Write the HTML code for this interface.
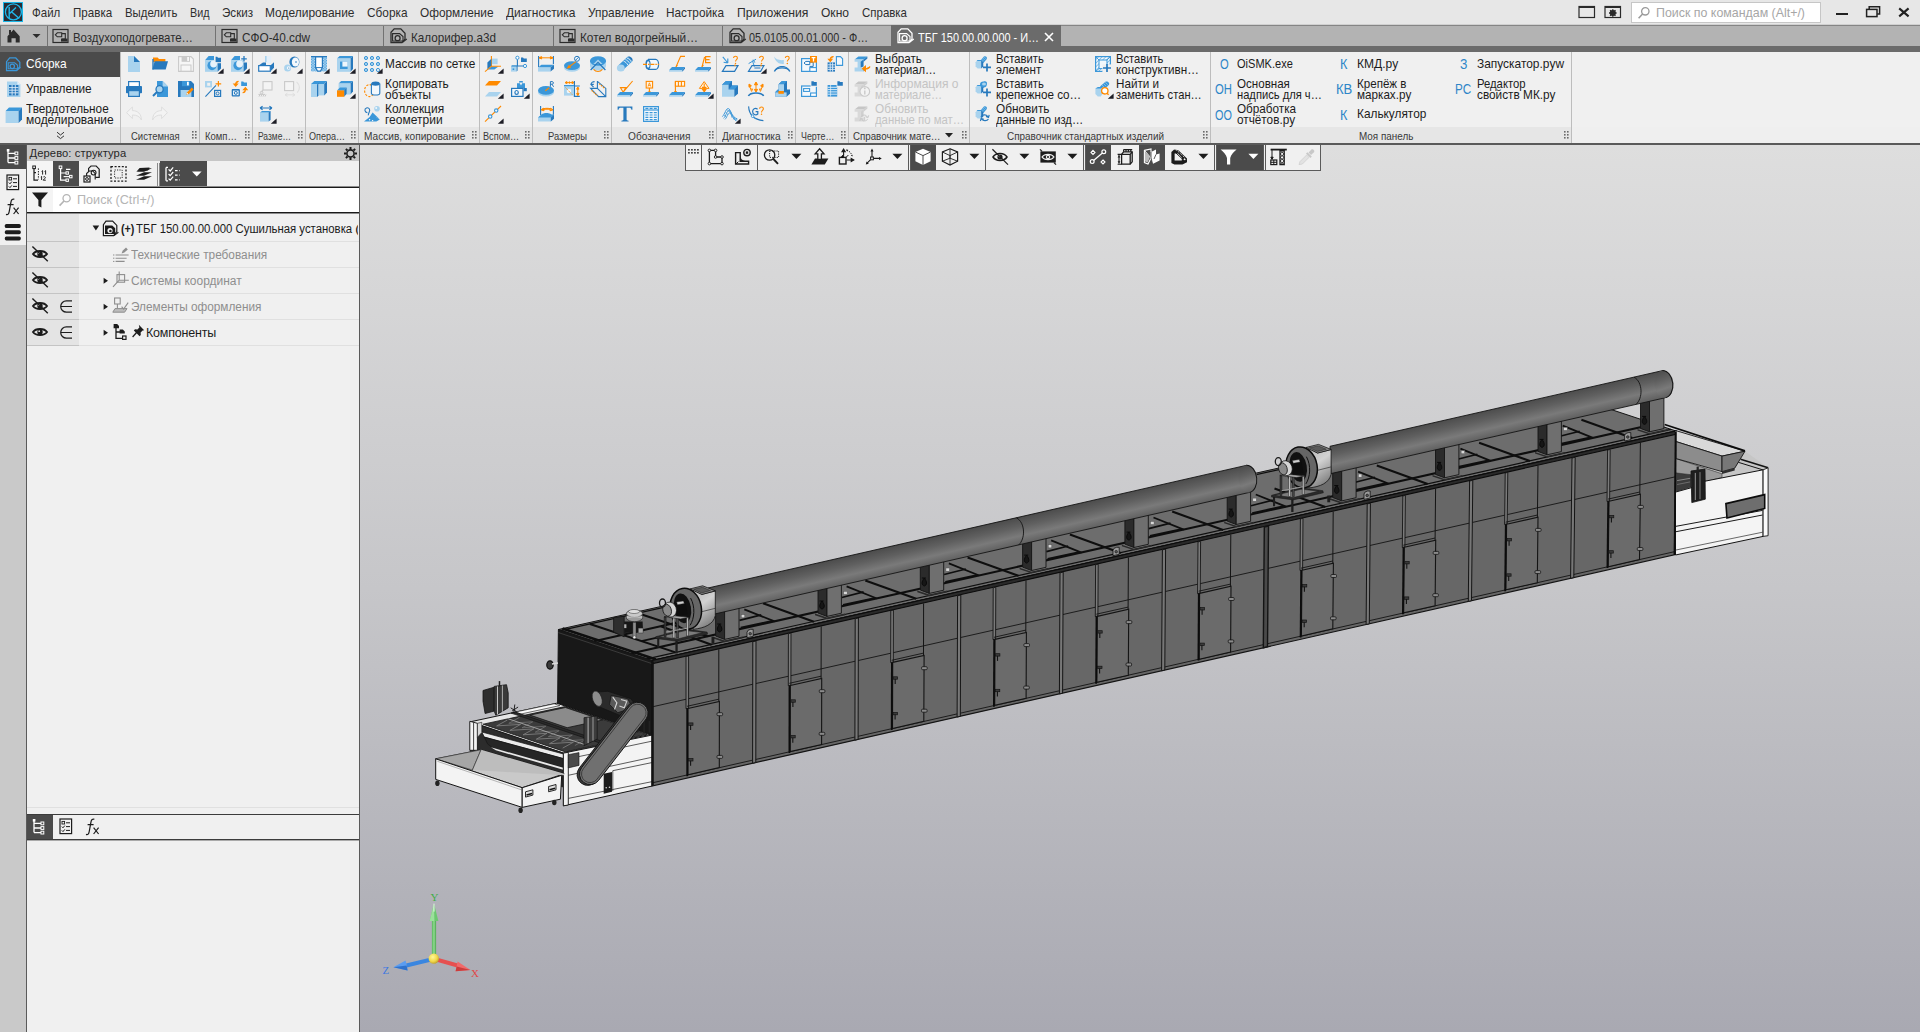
<!DOCTYPE html>
<html lang="ru"><head><meta charset="utf-8"><title>KOMPAS-3D</title><style>
html,body{margin:0;padding:0;}
body{width:1920px;height:1032px;overflow:hidden;position:relative;background:#c9c9c9;font-family:"Liberation Sans",sans-serif;}
.t{position:absolute;white-space:pre;transform-origin:0 0;}
.b{position:absolute;}
svg{overflow:visible;}
</style></head>
<body>
<!-- view -->
<div class="b" style="left:360px;top:145px;width:1560px;height:887px;background:linear-gradient(180deg,#dedede 0%,#c6c6c9 50%,#a9a9b2 100%);"></div>
<svg class="b" style="left:0;top:0" width="1920" height="1032" viewBox="0 0 1920 1032"><defs><linearGradient id="pg" gradientUnits="userSpaceOnUse" x1="1016.3" y1="517.8" x2="1022.2" y2="543.6" spreadMethod="pad"><stop offset="0" stop-color="#4c4c4c"/><stop offset="0.35" stop-color="#606060"/><stop offset="0.7" stop-color="#7a7a7a"/><stop offset="1" stop-color="#626262"/></linearGradient><linearGradient id="pgc" x1="0" y1="0" x2="0.3" y2="1"><stop offset="0" stop-color="#505050"/><stop offset="0.6" stop-color="#727272"/><stop offset="1" stop-color="#5e5e5e"/></linearGradient></defs>
<polygon points="652.0,660.5 1676.0,431.0 1582.4,400.0 558.4,629.5" fill="#6d6d6d" stroke="#141414" stroke-width="1" />
<line x1="646.9" y1="658.8" x2="1670.9" y2="429.3" stroke="#0e0e0e" stroke-width="1.2" />
<line x1="630.8" y1="653.5" x2="1654.8" y2="424.0" stroke="#0e0e0e" stroke-width="2.1" />
<line x1="561.2" y1="630.4" x2="1585.2" y2="400.9" stroke="#0e0e0e" stroke-width="1.2" />
<line x1="660.7" y1="626.3" x2="711.6" y2="644.7" stroke="#0e0e0e" stroke-width="2.1" />
<line x1="744.3" y1="609.3" x2="774.6" y2="621.4" stroke="#0e0e0e" stroke-width="1.8" />
<line x1="739.5" y1="620.4" x2="761.3" y2="614.9" stroke="#0e0e0e" stroke-width="1.7" />
<line x1="740.7" y1="627.7" x2="772.2" y2="620.9" stroke="#0e0e0e" stroke-width="1.7" />
<line x1="763.0" y1="603.3" x2="813.9" y2="621.7" stroke="#0e0e0e" stroke-width="2.1" />
<line x1="846.6" y1="586.3" x2="876.9" y2="598.5" stroke="#0e0e0e" stroke-width="1.8" />
<line x1="841.8" y1="597.5" x2="863.6" y2="591.9" stroke="#0e0e0e" stroke-width="1.7" />
<line x1="843.0" y1="604.8" x2="874.5" y2="598.0" stroke="#0e0e0e" stroke-width="1.7" />
<line x1="865.3" y1="580.4" x2="916.2" y2="598.8" stroke="#0e0e0e" stroke-width="2.1" />
<line x1="948.9" y1="563.4" x2="979.2" y2="575.5" stroke="#0e0e0e" stroke-width="1.8" />
<line x1="944.1" y1="574.5" x2="965.9" y2="569.0" stroke="#0e0e0e" stroke-width="1.7" />
<line x1="945.3" y1="581.8" x2="976.8" y2="575.0" stroke="#0e0e0e" stroke-width="1.7" />
<line x1="967.6" y1="557.4" x2="1018.5" y2="575.8" stroke="#0e0e0e" stroke-width="2.1" />
<line x1="1051.2" y1="540.4" x2="1081.5" y2="552.6" stroke="#0e0e0e" stroke-width="1.8" />
<line x1="1046.4" y1="551.6" x2="1068.2" y2="546.0" stroke="#0e0e0e" stroke-width="1.7" />
<line x1="1047.6" y1="558.9" x2="1079.1" y2="552.1" stroke="#0e0e0e" stroke-width="1.7" />
<line x1="1069.9" y1="534.5" x2="1120.8" y2="552.9" stroke="#0e0e0e" stroke-width="2.1" />
<line x1="1153.5" y1="517.5" x2="1183.8" y2="529.6" stroke="#0e0e0e" stroke-width="1.8" />
<line x1="1148.7" y1="528.6" x2="1170.5" y2="523.1" stroke="#0e0e0e" stroke-width="1.7" />
<line x1="1149.9" y1="535.9" x2="1181.4" y2="529.1" stroke="#0e0e0e" stroke-width="1.7" />
<line x1="1172.2" y1="511.5" x2="1223.1" y2="529.9" stroke="#0e0e0e" stroke-width="2.1" />
<line x1="1255.8" y1="494.5" x2="1286.1" y2="506.7" stroke="#0e0e0e" stroke-width="1.8" />
<line x1="1251.0" y1="505.7" x2="1272.8" y2="500.1" stroke="#0e0e0e" stroke-width="1.7" />
<line x1="1252.2" y1="513.0" x2="1283.7" y2="506.2" stroke="#0e0e0e" stroke-width="1.7" />
<line x1="1274.5" y1="488.6" x2="1325.4" y2="507.0" stroke="#0e0e0e" stroke-width="2.1" />
<line x1="1358.1" y1="471.6" x2="1388.4" y2="483.7" stroke="#0e0e0e" stroke-width="1.8" />
<line x1="1353.3" y1="482.7" x2="1375.1" y2="477.2" stroke="#0e0e0e" stroke-width="1.7" />
<line x1="1354.5" y1="490.0" x2="1386.0" y2="483.2" stroke="#0e0e0e" stroke-width="1.7" />
<line x1="1376.8" y1="465.6" x2="1427.7" y2="484.0" stroke="#0e0e0e" stroke-width="2.1" />
<line x1="1460.4" y1="448.6" x2="1490.7" y2="460.8" stroke="#0e0e0e" stroke-width="1.8" />
<line x1="1455.6" y1="459.8" x2="1477.4" y2="454.2" stroke="#0e0e0e" stroke-width="1.7" />
<line x1="1456.8" y1="467.1" x2="1488.3" y2="460.3" stroke="#0e0e0e" stroke-width="1.7" />
<line x1="1479.1" y1="442.7" x2="1530.0" y2="461.1" stroke="#0e0e0e" stroke-width="2.1" />
<line x1="1562.7" y1="425.7" x2="1593.0" y2="437.8" stroke="#0e0e0e" stroke-width="1.8" />
<line x1="1557.9" y1="436.8" x2="1579.7" y2="431.3" stroke="#0e0e0e" stroke-width="1.7" />
<line x1="1559.1" y1="444.1" x2="1590.6" y2="437.3" stroke="#0e0e0e" stroke-width="1.7" />
<line x1="1581.4" y1="419.7" x2="1632.3" y2="438.1" stroke="#0e0e0e" stroke-width="2.1" />
<line x1="656.1" y1="659.6" x2="562.5" y2="628.6" stroke="#0e0e0e" stroke-width="2.6" />
<line x1="675.5" y1="652.4" x2="589.9" y2="624.0" stroke="#0e0e0e" stroke-width="2" />
<line x1="594.0" y1="641.3" x2="686.1" y2="620.6" stroke="#0e0e0e" stroke-width="2" />
<line x1="641.4" y1="641.1" x2="689.5" y2="630.3" stroke="#0e0e0e" stroke-width="1.8" />
<line x1="707.6" y1="636.3" x2="638.0" y2="613.2" stroke="#0e0e0e" stroke-width="2" />
<path d="M747.0 637.7v-5.4q0.4-2.6 3.6-3h2.6v7z" fill="#9a9a9a" stroke="#111" stroke-width="0.8"/><circle cx="750.2" cy="633.7" r="1.3" fill="#555" stroke="#111" stroke-width="0.6"/>
<path d="M1113.0 555.7v-5.4q0.4-2.6 3.6-3h2.6v7z" fill="#9a9a9a" stroke="#111" stroke-width="0.8"/><circle cx="1116.2" cy="551.7" r="1.3" fill="#555" stroke="#111" stroke-width="0.6"/>
<path d="M1364.0 499.4v-5.4q0.4-2.6 3.6-3h2.6v7z" fill="#9a9a9a" stroke="#111" stroke-width="0.8"/><circle cx="1367.2" cy="495.4" r="1.3" fill="#555" stroke="#111" stroke-width="0.6"/>
<path d="M1624.6 441.0v-5.4q0.4-2.6 3.6-3h2.6v7z" fill="#9a9a9a" stroke="#111" stroke-width="0.8"/><circle cx="1627.8" cy="437.0" r="1.3" fill="#555" stroke="#111" stroke-width="0.6"/>
<polygon points="652.0,660.5 1676.0,431.0 1674.4,554.8 652.0,786.0" fill="#676767" stroke="#141414" stroke-width="1.2" />
<polygon points="652.0,660.5 1676.0,431.0 1676.0,434.2 652.0,663.8" fill="#2a2a2a" stroke="#0c0c0c" stroke-width="1.1" />
<line x1="652.0" y1="782.9" x2="1674.4" y2="551.7" stroke="#141414" stroke-width="0.9" />
<line x1="652.0" y1="706.9" x2="1675.4" y2="476.8" stroke="#141414" stroke-width="0.9" />
<polygon points="686.0,656.6 688.6,656.1 688.6,708.1 686.0,708.7" fill="#7a7a7a" stroke="#141414" stroke-width="0.9" />
<line x1="718.8" y1="649.3" x2="718.8" y2="701.3" stroke="#141414" stroke-width="1.0" />
<line x1="687.0" y1="706.3" x2="718.8" y2="699.2" stroke="#141414" stroke-width="0.9" />
<polygon points="688.0,708.5 719.4,701.4 719.3,767.6 688.0,774.7" fill="#6b6b6b" stroke="#141414" stroke-width="1.1" />
<line x1="687.2" y1="708.4" x2="687.2" y2="776.2" stroke="#0c0c0c" stroke-width="1.8" />
<rect x="717.0" y="712.7" width="5.6" height="3" rx="1" fill="#8a8a8a" stroke="#141414" stroke-width="0.8"/>
<rect x="717.0" y="755.4" width="5.6" height="3" rx="1" fill="#8a8a8a" stroke="#141414" stroke-width="0.8"/>
<rect x="688.6" y="722.9" width="4.4" height="2.4" fill="#3a3a3a" stroke="#141414" stroke-width="0.7"/>
<line x1="690.6" y1="725.1" x2="690.6" y2="730.1" stroke="#141414" stroke-width="1.1" />
<rect x="688.6" y="758.6" width="4.4" height="2.4" fill="#3a3a3a" stroke="#141414" stroke-width="0.7"/>
<line x1="690.6" y1="760.8" x2="690.6" y2="765.8" stroke="#141414" stroke-width="1.1" />
<polygon points="752.8,641.7 756.0,641.0 755.8,762.5 752.6,763.2" fill="#777" stroke="#141414" stroke-width="1.0" />
<polygon points="788.4,633.7 791.0,633.1 790.9,685.1 788.3,685.7" fill="#7a7a7a" stroke="#141414" stroke-width="0.9" />
<line x1="821.2" y1="626.3" x2="821.1" y2="678.3" stroke="#141414" stroke-width="1.0" />
<line x1="789.3" y1="683.3" x2="821.1" y2="676.2" stroke="#141414" stroke-width="0.9" />
<polygon points="790.3,685.5 821.7,678.4 821.6,744.5 790.2,751.6" fill="#6b6b6b" stroke="#141414" stroke-width="1.1" />
<line x1="789.5" y1="685.4" x2="789.4" y2="753.0" stroke="#0c0c0c" stroke-width="1.8" />
<rect x="819.3" y="689.7" width="5.6" height="3" rx="1" fill="#8a8a8a" stroke="#141414" stroke-width="0.8"/>
<rect x="819.2" y="732.3" width="5.6" height="3" rx="1" fill="#8a8a8a" stroke="#141414" stroke-width="0.8"/>
<rect x="790.9" y="699.8" width="4.4" height="2.4" fill="#3a3a3a" stroke="#141414" stroke-width="0.7"/>
<line x1="792.9" y1="702.0" x2="792.9" y2="707.0" stroke="#141414" stroke-width="1.1" />
<rect x="790.8" y="735.5" width="4.4" height="2.4" fill="#3a3a3a" stroke="#141414" stroke-width="0.7"/>
<line x1="792.8" y1="737.7" x2="792.8" y2="742.7" stroke="#141414" stroke-width="1.1" />
<polygon points="855.2,618.7 858.4,618.0 858.1,739.4 854.9,740.1" fill="#777" stroke="#141414" stroke-width="1.0" />
<polygon points="890.8,610.7 893.4,610.1 893.3,662.1 890.7,662.6" fill="#7a7a7a" stroke="#141414" stroke-width="0.9" />
<line x1="923.6" y1="603.4" x2="923.5" y2="655.3" stroke="#141414" stroke-width="1.0" />
<line x1="891.7" y1="660.3" x2="923.5" y2="653.1" stroke="#141414" stroke-width="0.9" />
<polygon points="892.7,662.4 924.1,655.4 923.8,721.4 892.5,728.5" fill="#6b6b6b" stroke="#141414" stroke-width="1.1" />
<line x1="891.9" y1="662.4" x2="891.7" y2="729.9" stroke="#0c0c0c" stroke-width="1.8" />
<rect x="921.6" y="666.7" width="5.6" height="3" rx="1" fill="#8a8a8a" stroke="#141414" stroke-width="0.8"/>
<rect x="921.5" y="709.2" width="5.6" height="3" rx="1" fill="#8a8a8a" stroke="#141414" stroke-width="0.8"/>
<rect x="893.2" y="676.8" width="4.4" height="2.4" fill="#3a3a3a" stroke="#141414" stroke-width="0.7"/>
<line x1="895.2" y1="679.0" x2="895.2" y2="684.0" stroke="#141414" stroke-width="1.1" />
<rect x="893.1" y="712.4" width="4.4" height="2.4" fill="#3a3a3a" stroke="#141414" stroke-width="0.7"/>
<line x1="895.1" y1="714.6" x2="895.1" y2="719.6" stroke="#141414" stroke-width="1.1" />
<polygon points="957.6,595.8 960.8,595.0 960.3,716.3 957.1,717.0" fill="#777" stroke="#141414" stroke-width="1.0" />
<polygon points="993.2,587.8 995.8,587.2 995.6,639.0 993.0,639.6" fill="#7a7a7a" stroke="#141414" stroke-width="0.9" />
<line x1="1026.0" y1="580.4" x2="1025.8" y2="632.2" stroke="#141414" stroke-width="1.0" />
<line x1="994.0" y1="637.3" x2="1025.8" y2="630.1" stroke="#141414" stroke-width="0.9" />
<polygon points="995.0,639.4 1026.4,632.4 1026.1,698.3 994.7,705.4" fill="#6b6b6b" stroke="#141414" stroke-width="1.1" />
<line x1="994.2" y1="639.3" x2="993.9" y2="706.8" stroke="#0c0c0c" stroke-width="1.8" />
<rect x="1023.9" y="643.6" width="5.6" height="3" rx="1" fill="#8a8a8a" stroke="#141414" stroke-width="0.8"/>
<rect x="1023.7" y="686.1" width="5.6" height="3" rx="1" fill="#8a8a8a" stroke="#141414" stroke-width="0.8"/>
<rect x="995.5" y="653.7" width="4.4" height="2.4" fill="#3a3a3a" stroke="#141414" stroke-width="0.7"/>
<line x1="997.5" y1="655.9" x2="997.5" y2="660.9" stroke="#141414" stroke-width="1.1" />
<rect x="995.4" y="689.3" width="4.4" height="2.4" fill="#3a3a3a" stroke="#141414" stroke-width="0.7"/>
<line x1="997.4" y1="691.5" x2="997.4" y2="696.5" stroke="#141414" stroke-width="1.1" />
<polygon points="1060.0,572.8 1063.2,572.1 1062.6,693.2 1059.4,693.9" fill="#777" stroke="#141414" stroke-width="1.0" />
<polygon points="1095.6,564.8 1098.2,564.2 1097.9,616.0 1095.3,616.6" fill="#7a7a7a" stroke="#141414" stroke-width="0.9" />
<line x1="1128.4" y1="557.5" x2="1128.1" y2="609.2" stroke="#141414" stroke-width="1.0" />
<line x1="1096.3" y1="614.2" x2="1128.1" y2="607.1" stroke="#141414" stroke-width="0.9" />
<polygon points="1097.3,616.4 1128.7,609.3 1128.3,675.2 1096.9,682.3" fill="#6b6b6b" stroke="#141414" stroke-width="1.1" />
<line x1="1096.5" y1="616.3" x2="1096.1" y2="683.7" stroke="#0c0c0c" stroke-width="1.8" />
<rect x="1126.2" y="620.6" width="5.6" height="3" rx="1" fill="#8a8a8a" stroke="#141414" stroke-width="0.8"/>
<rect x="1126.0" y="663.0" width="5.6" height="3" rx="1" fill="#8a8a8a" stroke="#141414" stroke-width="0.8"/>
<rect x="1097.8" y="630.7" width="4.4" height="2.4" fill="#3a3a3a" stroke="#141414" stroke-width="0.7"/>
<line x1="1099.8" y1="632.9" x2="1099.8" y2="637.9" stroke="#141414" stroke-width="1.1" />
<rect x="1097.6" y="666.2" width="4.4" height="2.4" fill="#3a3a3a" stroke="#141414" stroke-width="0.7"/>
<line x1="1099.6" y1="668.4" x2="1099.6" y2="673.4" stroke="#141414" stroke-width="1.1" />
<polygon points="1162.4,549.8 1165.6,549.1 1164.8,670.0 1161.6,670.8" fill="#777" stroke="#141414" stroke-width="1.0" />
<polygon points="1198.0,541.9 1200.6,541.3 1200.2,593.0 1197.6,593.6" fill="#7a7a7a" stroke="#141414" stroke-width="0.9" />
<line x1="1230.8" y1="534.5" x2="1230.4" y2="586.2" stroke="#141414" stroke-width="1.0" />
<line x1="1198.7" y1="591.2" x2="1230.5" y2="584.1" stroke="#141414" stroke-width="0.9" />
<polygon points="1199.6,593.4 1231.0,586.3 1230.6,652.1 1199.2,659.2" fill="#6b6b6b" stroke="#141414" stroke-width="1.1" />
<line x1="1198.8" y1="593.3" x2="1198.4" y2="660.6" stroke="#0c0c0c" stroke-width="1.8" />
<rect x="1228.6" y="597.5" width="5.6" height="3" rx="1" fill="#8a8a8a" stroke="#141414" stroke-width="0.8"/>
<rect x="1228.2" y="639.9" width="5.6" height="3" rx="1" fill="#8a8a8a" stroke="#141414" stroke-width="0.8"/>
<rect x="1200.1" y="607.6" width="4.4" height="2.4" fill="#3a3a3a" stroke="#141414" stroke-width="0.7"/>
<line x1="1202.1" y1="609.8" x2="1202.1" y2="614.8" stroke="#141414" stroke-width="1.1" />
<rect x="1199.9" y="643.1" width="4.4" height="2.4" fill="#3a3a3a" stroke="#141414" stroke-width="0.7"/>
<line x1="1201.9" y1="645.3" x2="1201.9" y2="650.3" stroke="#141414" stroke-width="1.1" />
<polygon points="1264.3,527.0 1268.5,526.1 1267.5,646.8 1263.3,647.8" fill="#4a4a4a" stroke="#141414" stroke-width="1.4" />
<polygon points="1300.4,518.9 1303.0,518.3 1302.6,570.0 1300.0,570.5" fill="#7a7a7a" stroke="#141414" stroke-width="0.9" />
<line x1="1333.2" y1="511.5" x2="1332.8" y2="563.2" stroke="#141414" stroke-width="1.0" />
<line x1="1301.0" y1="568.2" x2="1332.8" y2="561.0" stroke="#141414" stroke-width="0.9" />
<polygon points="1302.0,570.3 1333.4,563.3 1332.8,628.9 1301.4,636.0" fill="#6b6b6b" stroke="#141414" stroke-width="1.1" />
<line x1="1301.2" y1="570.3" x2="1300.6" y2="637.5" stroke="#0c0c0c" stroke-width="1.8" />
<rect x="1330.9" y="574.5" width="5.6" height="3" rx="1" fill="#8a8a8a" stroke="#141414" stroke-width="0.8"/>
<rect x="1330.5" y="616.8" width="5.6" height="3" rx="1" fill="#8a8a8a" stroke="#141414" stroke-width="0.8"/>
<rect x="1302.4" y="584.6" width="4.4" height="2.4" fill="#3a3a3a" stroke="#141414" stroke-width="0.7"/>
<line x1="1304.4" y1="586.8" x2="1304.4" y2="591.8" stroke="#141414" stroke-width="1.1" />
<rect x="1302.2" y="620.0" width="4.4" height="2.4" fill="#3a3a3a" stroke="#141414" stroke-width="0.7"/>
<line x1="1304.2" y1="622.2" x2="1304.2" y2="627.2" stroke="#141414" stroke-width="1.1" />
<polygon points="1367.2,503.9 1370.4,503.2 1369.3,623.8 1366.1,624.5" fill="#777" stroke="#141414" stroke-width="1.0" />
<polygon points="1402.8,496.0 1405.4,495.4 1404.9,546.9 1402.3,547.5" fill="#7a7a7a" stroke="#141414" stroke-width="0.9" />
<line x1="1435.6" y1="488.6" x2="1435.1" y2="540.1" stroke="#141414" stroke-width="1.0" />
<line x1="1403.3" y1="545.2" x2="1435.1" y2="538.0" stroke="#141414" stroke-width="0.9" />
<polygon points="1404.3,547.3 1435.7,540.2 1435.1,605.8 1403.7,612.9" fill="#6b6b6b" stroke="#141414" stroke-width="1.1" />
<line x1="1403.5" y1="547.2" x2="1402.9" y2="614.3" stroke="#0c0c0c" stroke-width="1.8" />
<rect x="1433.2" y="551.4" width="5.6" height="3" rx="1" fill="#8a8a8a" stroke="#141414" stroke-width="0.8"/>
<rect x="1432.8" y="593.7" width="5.6" height="3" rx="1" fill="#8a8a8a" stroke="#141414" stroke-width="0.8"/>
<rect x="1404.8" y="561.5" width="4.4" height="2.4" fill="#3a3a3a" stroke="#141414" stroke-width="0.7"/>
<line x1="1406.8" y1="563.7" x2="1406.8" y2="568.7" stroke="#141414" stroke-width="1.1" />
<rect x="1404.4" y="596.9" width="4.4" height="2.4" fill="#3a3a3a" stroke="#141414" stroke-width="0.7"/>
<line x1="1406.4" y1="599.1" x2="1406.4" y2="604.1" stroke="#141414" stroke-width="1.1" />
<polygon points="1469.6,481.0 1472.8,480.3 1471.5,600.7 1468.3,601.4" fill="#777" stroke="#141414" stroke-width="1.0" />
<polygon points="1505.2,473.0 1507.8,472.4 1507.2,523.9 1504.6,524.5" fill="#7a7a7a" stroke="#141414" stroke-width="0.9" />
<line x1="1538.0" y1="465.6" x2="1537.4" y2="517.1" stroke="#141414" stroke-width="1.0" />
<line x1="1505.7" y1="522.2" x2="1537.5" y2="515.0" stroke="#141414" stroke-width="0.9" />
<polygon points="1506.6,524.3 1538.0,517.2 1537.3,582.7 1505.9,589.8" fill="#6b6b6b" stroke="#141414" stroke-width="1.1" />
<line x1="1505.8" y1="524.2" x2="1505.1" y2="591.2" stroke="#0c0c0c" stroke-width="1.8" />
<rect x="1535.5" y="528.4" width="5.6" height="3" rx="1" fill="#8a8a8a" stroke="#141414" stroke-width="0.8"/>
<rect x="1535.0" y="570.6" width="5.6" height="3" rx="1" fill="#8a8a8a" stroke="#141414" stroke-width="0.8"/>
<rect x="1507.1" y="538.5" width="4.4" height="2.4" fill="#3a3a3a" stroke="#141414" stroke-width="0.7"/>
<line x1="1509.1" y1="540.7" x2="1509.1" y2="545.7" stroke="#141414" stroke-width="1.1" />
<rect x="1506.7" y="573.8" width="4.4" height="2.4" fill="#3a3a3a" stroke="#141414" stroke-width="0.7"/>
<line x1="1508.7" y1="576.0" x2="1508.7" y2="581.0" stroke="#141414" stroke-width="1.1" />
<polygon points="1572.0,458.0 1575.2,457.3 1573.8,577.6 1570.6,578.3" fill="#777" stroke="#141414" stroke-width="1.0" />
<polygon points="1607.6,450.0 1610.2,449.5 1609.6,500.9 1607.0,501.5" fill="#7a7a7a" stroke="#141414" stroke-width="0.9" />
<line x1="1640.4" y1="442.7" x2="1639.8" y2="494.1" stroke="#141414" stroke-width="1.0" />
<line x1="1608.0" y1="499.1" x2="1639.8" y2="492.0" stroke="#141414" stroke-width="0.9" />
<polygon points="1609.0,501.3 1640.4,494.2 1639.5,559.6 1608.2,566.7" fill="#6b6b6b" stroke="#141414" stroke-width="1.1" />
<line x1="1608.2" y1="501.2" x2="1607.4" y2="568.1" stroke="#0c0c0c" stroke-width="1.8" />
<rect x="1637.8" y="505.4" width="5.6" height="3" rx="1" fill="#8a8a8a" stroke="#141414" stroke-width="0.8"/>
<rect x="1637.3" y="547.5" width="5.6" height="3" rx="1" fill="#8a8a8a" stroke="#141414" stroke-width="0.8"/>
<rect x="1609.4" y="515.4" width="4.4" height="2.4" fill="#3a3a3a" stroke="#141414" stroke-width="0.7"/>
<line x1="1611.4" y1="517.6" x2="1611.4" y2="522.6" stroke="#141414" stroke-width="1.1" />
<rect x="1608.9" y="550.7" width="4.4" height="2.4" fill="#3a3a3a" stroke="#141414" stroke-width="0.7"/>
<line x1="1610.9" y1="552.9" x2="1610.9" y2="557.9" stroke="#141414" stroke-width="1.1" />
<polygon points="715.6,607.6 724.6,609.6 724.6,639.4 715.6,636.0" fill="#2b2b2b" stroke="#141414" stroke-width="0.9" />
<polygon points="724.6,609.6 739.0,606.4 739.0,636.2 724.6,639.4" fill="#6f6f6f" stroke="#141414" stroke-width="0.9" />
<polygon points="712.6,636.6 724.6,640.6 742.6,636.6 742.6,638.2 724.6,642.2 712.6,638.2" fill="#2a2a2a" />
<rect x="741.2" y="614.6" width="3.6" height="3.2" fill="#d8d8d8" stroke="#555" stroke-width="0.5"/>
<path d="M717.2 624.0h4M719.6 624.0c-3 4-3 7 0 8c3-1 3-4 0-8" fill="#161616" stroke="#0a0a0a" stroke-width="1"/>
<polygon points="818.0,584.3 827.0,586.3 827.0,616.4 818.0,613.0" fill="#2b2b2b" stroke="#141414" stroke-width="0.9" />
<polygon points="827.0,586.3 841.4,583.1 841.4,613.2 827.0,616.4" fill="#6f6f6f" stroke="#141414" stroke-width="0.9" />
<polygon points="815.0,613.6 827.0,617.6 845.0,613.6 845.0,615.2 827.0,619.2 815.0,615.2" fill="#2a2a2a" />
<rect x="843.6" y="591.3" width="3.6" height="3.2" fill="#d8d8d8" stroke="#555" stroke-width="0.5"/>
<path d="M819.6 601.0h4M822.0 601.0c-3 4-3 7 0 8c3-1 3-4 0-8" fill="#161616" stroke="#0a0a0a" stroke-width="1"/>
<polygon points="920.3,561.0 929.3,563.0 929.3,593.4 920.3,590.0" fill="#2b2b2b" stroke="#141414" stroke-width="0.9" />
<polygon points="929.3,563.0 943.7,559.8 943.7,590.2 929.3,593.4" fill="#6f6f6f" stroke="#141414" stroke-width="0.9" />
<polygon points="917.3,590.6 929.3,594.6 947.3,590.6 947.3,592.2 929.3,596.2 917.3,592.2" fill="#2a2a2a" />
<rect x="945.9" y="568.0" width="3.6" height="3.2" fill="#d8d8d8" stroke="#555" stroke-width="0.5"/>
<path d="M921.9 578.0h4M924.3 578.0c-3 4-3 7 0 8c3-1 3-4 0-8" fill="#161616" stroke="#0a0a0a" stroke-width="1"/>
<polygon points="1022.6,537.7 1031.6,539.7 1031.6,570.5 1022.6,567.1" fill="#2b2b2b" stroke="#141414" stroke-width="0.9" />
<polygon points="1031.6,539.7 1046.0,536.5 1046.0,567.3 1031.6,570.5" fill="#6f6f6f" stroke="#141414" stroke-width="0.9" />
<polygon points="1019.6,567.7 1031.6,571.7 1049.6,567.7 1049.6,569.3 1031.6,573.3 1019.6,569.3" fill="#2a2a2a" />
<rect x="1048.2" y="544.7" width="3.6" height="3.2" fill="#d8d8d8" stroke="#555" stroke-width="0.5"/>
<path d="M1024.2 555.1h4M1026.6 555.1c-3 4-3 7 0 8c3-1 3-4 0-8" fill="#161616" stroke="#0a0a0a" stroke-width="1"/>
<polygon points="1124.9,514.4 1133.9,516.4 1133.9,547.5 1124.9,544.1" fill="#2b2b2b" stroke="#141414" stroke-width="0.9" />
<polygon points="1133.9,516.4 1148.3,513.2 1148.3,544.3 1133.9,547.5" fill="#6f6f6f" stroke="#141414" stroke-width="0.9" />
<polygon points="1121.9,544.7 1133.9,548.7 1151.9,544.7 1151.9,546.3 1133.9,550.3 1121.9,546.3" fill="#2a2a2a" />
<rect x="1150.5" y="521.4" width="3.6" height="3.2" fill="#d8d8d8" stroke="#555" stroke-width="0.5"/>
<path d="M1126.5 532.1h4M1128.9 532.1c-3 4-3 7 0 8c3-1 3-4 0-8" fill="#161616" stroke="#0a0a0a" stroke-width="1"/>
<polygon points="1227.2,491.1 1236.2,493.1 1236.2,524.5 1227.2,521.1" fill="#2b2b2b" stroke="#141414" stroke-width="0.9" />
<polygon points="1236.2,493.1 1250.6,489.9 1250.6,521.3 1236.2,524.5" fill="#6f6f6f" stroke="#141414" stroke-width="0.9" />
<polygon points="1224.2,521.7 1236.2,525.7 1254.2,521.7 1254.2,523.3 1236.2,527.3 1224.2,523.3" fill="#2a2a2a" />
<rect x="1252.8" y="498.1" width="3.6" height="3.2" fill="#d8d8d8" stroke="#555" stroke-width="0.5"/>
<path d="M1228.8 509.1h4M1231.2 509.1c-3 4-3 7 0 8c3-1 3-4 0-8" fill="#161616" stroke="#0a0a0a" stroke-width="1"/>
<polygon points="1332.7,467.0 1341.7,469.0 1341.7,500.9 1332.7,497.5" fill="#2b2b2b" stroke="#141414" stroke-width="0.9" />
<polygon points="1341.7,469.0 1356.1,465.8 1356.1,497.7 1341.7,500.9" fill="#6f6f6f" stroke="#141414" stroke-width="0.9" />
<polygon points="1329.7,498.1 1341.7,502.1 1359.7,498.1 1359.7,499.7 1341.7,503.7 1329.7,499.7" fill="#2a2a2a" />
<rect x="1358.3" y="474.0" width="3.6" height="3.2" fill="#d8d8d8" stroke="#555" stroke-width="0.5"/>
<path d="M1334.3 485.5h4M1336.7 485.5c-3 4-3 7 0 8c3-1 3-4 0-8" fill="#161616" stroke="#0a0a0a" stroke-width="1"/>
<polygon points="1435.5,443.6 1444.5,445.6 1444.5,477.8 1435.5,474.4" fill="#2b2b2b" stroke="#141414" stroke-width="0.9" />
<polygon points="1444.5,445.6 1458.9,442.4 1458.9,474.6 1444.5,477.8" fill="#6f6f6f" stroke="#141414" stroke-width="0.9" />
<polygon points="1432.5,475.0 1444.5,479.0 1462.5,475.0 1462.5,476.6 1444.5,480.6 1432.5,476.6" fill="#2a2a2a" />
<rect x="1461.1" y="450.6" width="3.6" height="3.2" fill="#d8d8d8" stroke="#555" stroke-width="0.5"/>
<path d="M1437.1 462.4h4M1439.5 462.4c-3 4-3 7 0 8c3-1 3-4 0-8" fill="#161616" stroke="#0a0a0a" stroke-width="1"/>
<polygon points="1538.0,420.3 1547.0,422.3 1547.0,454.8 1538.0,451.4" fill="#2b2b2b" stroke="#141414" stroke-width="0.9" />
<polygon points="1547.0,422.3 1561.4,419.1 1561.4,451.6 1547.0,454.8" fill="#6f6f6f" stroke="#141414" stroke-width="0.9" />
<polygon points="1535.0,452.0 1547.0,456.0 1565.0,452.0 1565.0,453.6 1547.0,457.6 1535.0,453.6" fill="#2a2a2a" />
<rect x="1563.6" y="427.3" width="3.6" height="3.2" fill="#d8d8d8" stroke="#555" stroke-width="0.5"/>
<path d="M1539.6 439.4h4M1542.0 439.4c-3 4-3 7 0 8c3-1 3-4 0-8" fill="#161616" stroke="#0a0a0a" stroke-width="1"/>
<polygon points="1640.5,396.9 1649.5,398.9 1649.5,431.8 1640.5,428.4" fill="#2b2b2b" stroke="#141414" stroke-width="0.9" />
<polygon points="1649.5,398.9 1663.9,395.7 1663.9,428.6 1649.5,431.8" fill="#6f6f6f" stroke="#141414" stroke-width="0.9" />
<polygon points="1637.5,429.0 1649.5,433.0 1667.5,429.0 1667.5,430.6 1649.5,434.6 1637.5,430.6" fill="#2a2a2a" />
<path d="M1642.1 416.4h4M1644.5 416.4c-3 4-3 7 0 8c3-1 3-4 0-8" fill="#161616" stroke="#0a0a0a" stroke-width="1"/>
<polygon points="708.0,588.0 1247.0,465.2 1249.0,492.5 709.0,615.3" fill="url(#pg)" stroke="#141414" stroke-width="0.9" />
<ellipse cx="1248.0" cy="478.9" rx="9.6" ry="13.7" fill="url(#pg)" transform="rotate(-6 1248.0 478.9)"/>
<path d="M1248.0 465.2a9.6 13.7 0 0 1 0 27.3" fill="none" stroke="#141414" stroke-width="1" transform="rotate(-6 1248.0 478.9)"/>
<polygon points="1330.0,446.3 1663.0,370.5 1665.0,397.8 1331.0,473.6" fill="url(#pg)" stroke="#141414" stroke-width="0.9" />
<ellipse cx="1664.0" cy="384.1" rx="9.6" ry="13.7" fill="url(#pg)" transform="rotate(-6 1664.0 384.1)"/>
<path d="M1664.0 370.5a9.6 13.7 0 0 1 0 27.3" fill="none" stroke="#141414" stroke-width="1" transform="rotate(-6 1664.0 384.1)"/>
<path d="M1016.5 517.8c9 5 9 21.3 2 27.3" fill="none" stroke="#141414" stroke-width="0.9"/>
<path d="M1634.0 377.1c9 5 9 21.3 2 27.3" fill="none" stroke="#141414" stroke-width="0.9"/>
<polygon points="558.4,629.5 652.0,660.5 652.0,735.2 557.6,703.5" fill="#181818" stroke="#141414" stroke-width="1" />
<line x1="558.4" y1="632.6" x2="652.0" y2="663.6" stroke="#3a3a3a" stroke-width="1" />
<ellipse cx="550" cy="665" rx="3.2" ry="4.2" fill="#3a3a3a" stroke="#111" stroke-width="1.2"/><line x1="552" y1="664" x2="558" y2="663" stroke="#ddd" stroke-width="1.4"/>
<polygon points="470.3,721.8 556.8,703.2 649.9,734.5 563.4,753.1" fill="#e6e6e6" stroke="#141414" stroke-width="1" />
<polygon points="483.1,724.2 564.8,706.6 647.2,734.3 565.5,751.9" fill="#3b3b3b" stroke="#141414" stroke-width="0.8" />
<polygon points="529.9,715.1 565.4,707.5 602.6,720.0 567.2,727.7" fill="#8b8b8b" stroke="#141414" stroke-width="0.8" />
<polygon points="515.3,712.1 554.2,703.8 559.8,705.6 520.9,714.0" fill="#fafafa" stroke="#141414" stroke-width="0.6" />
<polyline points="507.4,720.0 496.7,725.9 520.6,724.4 509.9,730.4 533.8,728.9 523.1,734.8 547.0,733.3 536.3,739.2 560.2,737.7 549.5,743.7 573.4,742.2 562.7,748.1" fill="none" stroke="#7d7d7d" stroke-width="0.9"/>
<polyline points="519.5,717.4 508.8,723.3 532.7,721.8 522.0,727.8 545.9,726.2 535.2,732.2 559.1,730.7 548.4,736.6 572.3,735.1 561.6,741.1 585.5,739.6 574.9,745.5" fill="none" stroke="#6a6a6a" stroke-width="0.9"/>
<line x1="508.2" y1="718.8" x2="584.5" y2="744.5" stroke="#a8a8a8" stroke-width="0.9" />
<polygon points="511.0,713.1 515.3,712.1 608.4,743.4 604.1,744.4" fill="#2a2a2a" stroke="#141414" stroke-width="0.7" />
<polygon points="470.3,721.8 563.4,753.1 563.4,787.1 470.3,751.8" fill="#2c2c2c" stroke="#141414" stroke-width="0.8" />
<polygon points="481.8,732.0 564.2,754.2 564.2,758.8 484.3,737.1" fill="#ececec" stroke="#141414" stroke-width="0.7" />
<polygon points="484.3,737.1 564.2,758.8 564.2,767.9 494.2,749.0 487.6,744.0" fill="#262626" stroke="#141414" stroke-width="0.6" />
<polygon points="490.9,747.3 564.2,767.9 564.2,770.0 495.8,750.3" fill="#e9e9e9" />
<polygon points="469.8,721.3 477.4,723.3 477.4,750.3 469.8,750.3" fill="#f3f3f3" stroke="#141414" stroke-width="0.9" />
<line x1="473.6" y1="722.6" x2="473.6" y2="750.3" stroke="#141414" stroke-width="0.8" />
<polygon points="477.4,723.3 481.8,722.3 481.8,732.5 477.4,737.4" fill="#d8d8d8" stroke="#141414" stroke-width="0.6" />
<polygon points="563.4,753.1 652.3,735.0 652.3,786.0 563.4,805.8" fill="#f3f3f3" stroke="#141414" stroke-width="1" />
<polygon points="563.4,753.1 568.3,752.3 568.3,805.0 563.4,805.8" fill="#f3f3f3" stroke="#141414" stroke-width="0.9" />
<line x1="568.3" y1="758.8" x2="652.3" y2="741.1" stroke="#333" stroke-width="0.8" />
<line x1="568.3" y1="775.3" x2="652.3" y2="757.2" stroke="#333" stroke-width="0.8" />
<line x1="612.8" y1="770.7" x2="652.3" y2="762.5" stroke="#333" stroke-width="0.8" />
<line x1="568.3" y1="798.4" x2="652.3" y2="781.6" stroke="#333" stroke-width="0.8" />
<polygon points="568.3,754.7 579.0,752.6 579.0,765.4 568.3,767.9" fill="#4a4a4a" stroke="#141414" stroke-width="0.6" />
<line x1="612.8" y1="770.7" x2="612.8" y2="791.0" stroke="#333" stroke-width="0.8" />
<line x1="637.5" y1="721.0" x2="637.5" y2="732.5" stroke="#222" stroke-width="1.6" />
<line x1="644.1" y1="721.0" x2="644.1" y2="732.5" stroke="#222" stroke-width="1.6" />
<line x1="649.4" y1="721.0" x2="649.4" y2="732.5" stroke="#222" stroke-width="1.6" />
<polygon points="435.7,758.8 481.0,749.8 564.2,773.7 522.2,787.7" fill="#c9c9c9" stroke="#141414" stroke-width="0.8" />
<polygon points="435.7,758.8 481.0,749.8 472.4,770.0" fill="#a6a6a6" stroke="#333" stroke-width="0.6" />
<polygon points="481.0,749.8 564.2,773.7 564.2,775.3 472.4,770.0" fill="#bdbdbd" />
<line x1="481.0" y1="749.8" x2="472.4" y2="770.0" stroke="#333" stroke-width="0.7" />
<polygon points="435.7,758.8 522.2,787.7 522.2,807.4 435.7,779.4" fill="#f3f3f3" stroke="#141414" stroke-width="1" />
<line x1="437.4" y1="761.3" x2="522.2" y2="790.1" stroke="#999" stroke-width="0.7" />
<polygon points="522.2,787.7 561.7,775.3 560.4,799.2 522.2,807.4" fill="#f3f3f3" stroke="#141414" stroke-width="1" />
<polygon points="525.5,791.8 532.9,789.8 532.9,795.1 525.5,797.1" fill="#e0e0e0" stroke="#141414" stroke-width="0.9" />
<line x1="526.5" y1="795.1" x2="532.1" y2="793.4" stroke="#141414" stroke-width="1.6" />
<polygon points="548.6,786.5 556.0,784.5 556.0,789.8 548.6,791.8" fill="#e0e0e0" stroke="#141414" stroke-width="0.9" />
<line x1="549.5" y1="789.8" x2="555.1" y2="788.2" stroke="#141414" stroke-width="1.6" />
<ellipse cx="437.4" cy="783.2" rx="2.2" ry="2.8" fill="#222"/>
<ellipse cx="520.6" cy="810.2" rx="2.2" ry="2.8" fill="#222"/>
<ellipse cx="554.3" cy="802.5" rx="2.2" ry="2.8" fill="#222"/>
<polygon points="483.0,690.5 494.2,687.2 494.2,711.1 485.1,713.5 483.0,701.2" fill="#2e2e2e" stroke="#141414" stroke-width="0.8" />
<polygon points="494.2,686.4 506.5,684.7 508.2,692.9 508.2,707.8 495.8,715.2 494.2,711.1" fill="#3a3a3a" stroke="#141414" stroke-width="0.8" />
<line x1="497.5" y1="686.4" x2="497.5" y2="714.4" stroke="#c8c8c8" stroke-width="1" />
<line x1="502.4" y1="685.5" x2="502.4" y2="711.9" stroke="#b0b0b0" stroke-width="1" />
<line x1="499.5" y1="681.1" x2="499.5" y2="686.4" stroke="#222" stroke-width="1.5" />
<path d="M510.7 707.8l6 4M514.8 704.5l-1 8M518.1 707.0l-6 4" stroke="#111" stroke-width="0.9"/>
<polygon points="594.7,692.1 607.9,691.3 630.9,698.7 637.5,707.8 619.4,715.2 599.6,707.0 593.0,699.5" fill="#2b2b2b" stroke="#141414" stroke-width="0.8" />
<ellipse cx="597.2" cy="698.7" rx="4.6" ry="8" fill="#8d8d8d" stroke="#222" stroke-width="0.7" transform="rotate(-20 597.2 698.7)"/>
<polygon points="611.2,695.4 627.6,698.7 632.6,707.8 617.8,712.7 609.5,704.5" fill="#5a5a5a" stroke="#111" stroke-width="0.7" />
<polyline points="612.8,697.1 616.9,702.8 614.5,709.4" fill="none" stroke="#dcdcdc" stroke-width="1.1"/>
<polyline points="621.0,699.5 626.8,701.2 624.3,707.8 619.4,706.1" fill="none" stroke="#cfcfcf" stroke-width="1.1"/>
<polygon points="584.0,717.7 597.2,716.0 597.2,739.1 584.0,745.7" fill="#3c3c3c" stroke="#141414" stroke-width="0.7" />
<line x1="588.1" y1="717.7" x2="588.1" y2="743.2" stroke="#bdbdbd" stroke-width="1" />
<line x1="593.0" y1="716.8" x2="593.0" y2="740.7" stroke="#9a9a9a" stroke-width="1" />
<g transform="translate(-2.2,0.6)"><path d="M629.3 705.8L581.5 767.4A10.8 10.8 0 0 0 598.6 780.6L646.4 719.0A10.8 10.8 0 0 0 629.3 705.8z" fill="#3a3a3a" stroke="#141414" stroke-width="0.9"/></g>
<path d="M629.5 705.9L581.7 767.5A10.6 10.6 0 0 0 598.5 780.5L646.2 718.9A10.6 10.6 0 0 0 629.5 705.9z" fill="#707070" stroke="#141414" stroke-width="1"/>
<path d="M631.1 707.1L583.3 768.7A8.6 8.6 0 0 0 596.9 779.3L644.6 717.7A8.6 8.6 0 0 0 631.1 707.1z" fill="none" stroke="#2e2e2e" stroke-width="0.8"/>
<polygon points="603.7,773.7 612.0,772.0 612.0,791.8 603.7,793.8" fill="#1c1c1c" />
<circle cx="606.2" cy="787.7" r="0.8" fill="#ddd"/><circle cx="609.5" cy="787.2" r="0.8" fill="#ddd"/>
<polygon points="651.2,661.0 653.8,661.4 653.8,785.6 651.2,786.0" fill="#121212" />
<polygon points="1675.5,431.0 1745.0,451.2 1768.1,467.8 1763.1,470.1 1675.5,493.0" fill="#c6c6c6" />
<polygon points="1676.1,458.6 1722.0,473.8 1722.0,477.5 1706.5,481.4 1676.1,473.2" fill="#9a9a9a" stroke="#333" stroke-width="0.6" />
<polygon points="1676.1,472.9 1691.0,474.7 1691.0,487.1 1676.1,491.8" fill="#3c3c3c" stroke="#222" stroke-width="0.5" />
<line x1="1677.1" y1="480.6" x2="1690.2" y2="478.3" stroke="#9a9a9a" stroke-width="0.8" />
<line x1="1677.1" y1="484.5" x2="1690.2" y2="481.9" stroke="#777" stroke-width="0.8" />
<line x1="1740.6" y1="459.2" x2="1768.1" y2="467.8" stroke="#141414" stroke-width="1.6" />
<line x1="1738.3" y1="462.3" x2="1763.6" y2="470.1" stroke="#141414" stroke-width="1.0" />
<polygon points="1676.1,430.7 1745.0,451.2 1722.0,456.1 1676.1,441.6" fill="#d9d9d9" stroke="#141414" stroke-width="0.9" />
<polygon points="1676.1,441.6 1722.0,456.1 1722.0,471.6 1676.1,458.6" fill="#8c8c8c" stroke="#141414" stroke-width="0.9" />
<polygon points="1722.0,456.1 1745.0,451.2 1734.7,468.2 1722.0,471.6" fill="#777" stroke="#141414" stroke-width="0.9" />
<polygon points="1722.0,471.6 1734.7,468.2 1734.7,470.4 1722.0,474.1" fill="#2e2e2e" />
<line x1="1664.7" y1="424.5" x2="1745.0" y2="450.9" stroke="#0c0c0c" stroke-width="1.8" />
<polygon points="1675.5,492.1 1691.0,487.8 1705.0,481.2 1763.1,469.8 1763.1,536.4 1675.5,555.0" fill="#f4f4f4" stroke="#141414" stroke-width="1" />
<polygon points="1763.1,469.8 1768.1,467.8 1768.1,535.7 1763.1,536.4" fill="#fafafa" stroke="#141414" stroke-width="0.9" />
<line x1="1675.5" y1="526.4" x2="1762.6" y2="510.4" stroke="#1a1a1a" stroke-width="1" />
<line x1="1675.5" y1="531.8" x2="1762.6" y2="515.0" stroke="#1a1a1a" stroke-width="1" />
<line x1="1675.5" y1="550.1" x2="1763.1" y2="532.1" stroke="#444" stroke-width="0.8" />
<polygon points="1725.9,503.6 1764.7,494.6 1764.7,508.5 1727.0,518.1" fill="#6e6e6e" stroke="#0c0c0c" stroke-width="1.6" />
<polygon points="1691.0,471.0 1705.0,469.1 1705.3,499.2 1691.8,502.6" fill="#1e1e1e" stroke="#141414" stroke-width="0.8" />
<line x1="1695.3" y1="472.9" x2="1695.3" y2="500.0" stroke="#a8a8a8" stroke-width="0.9" />
<line x1="1700.0" y1="472.1" x2="1700.0" y2="499.2" stroke="#8a8a8a" stroke-width="0.9" />
<polygon points="1696.6,466.7 1698.8,466.4 1698.8,470.7 1696.6,471.0" fill="#222" />
<line x1="1675.6" y1="432.0" x2="1674.6" y2="555.0" stroke="#0c0c0c" stroke-width="1.8" />
<defs><linearGradient id="fg" x1="0" y1="0" x2="0.4" y2="1"><stop offset="0" stop-color="#b8b8b8"/><stop offset="0.45" stop-color="#d2d2d2"/><stop offset="1" stop-color="#858585"/></linearGradient></defs><polygon points="613.6,617.5 624.2,616.3 624.2,636.9 613.6,632.0" fill="#2e2e2e" stroke="#141414" stroke-width="0.8" />
<polygon points="624.2,621.4 642.6,621.4 643.1,632.0 624.2,633.0" fill="#161616" />
<polygon points="624.2,624.3 626.4,624.3 626.4,628.1 624.2,628.1" fill="#b0b0b0" />
<polygon points="632.9,622.3 636.0,622.3 636.0,636.9 632.9,636.9" fill="#8d8d8d" stroke="#222" stroke-width="0.4" />
<polygon points="638.3,628.1 643.1,628.1 643.1,633.0 638.3,633.0" fill="#a5a5a5" stroke="#222" stroke-width="0.4" />
<path d="M626.4 613.6L626.4 618.4C629.1 622.8 639.7 622.8 642.6 618.4L642.6 613.6z" fill="#9c9c9c" stroke="#141414" stroke-width="0.6"/>
<ellipse cx="634.5" cy="613.6" rx="8.2" ry="3.6" fill="#c9c9c9" stroke="#141414" stroke-width="0.6"/>
<ellipse cx="634.1" cy="611.5" rx="5.6" ry="2" fill="#e0e0e0" stroke="#333" stroke-width="0.5"/>
<line x1="626.6" y1="617.0" x2="642.4" y2="617.0" stroke="#e6e6e6" stroke-width="0.9" />
<circle cx="634.4" cy="637.3" r="1.5" fill="#eee" stroke="#333" stroke-width="0.4"/><polygon points="657.2,637.9 659.3,637.9 659.3,647.6 657.2,647.6" fill="#1e1e1e" />
<polygon points="675.4,640.8 677.7,640.8 677.7,653.4 675.4,653.4" fill="#1e1e1e" />
<polygon points="711.5,636.9 714.4,636.9 714.4,643.7 711.5,643.7" fill="#1e1e1e" />
<polygon points="655.7,636.7 685.3,629.1 707.1,632.1 707.6,634.2 677.5,641.3 655.7,638.4" fill="#2a2a2a" stroke="#141414" stroke-width="0.5" />
<polygon points="659.1,636.7 685.3,630.6 702.7,632.5 677.5,639.0" fill="#7c7c7c" stroke="#1a1a1a" stroke-width="0.5" />
<path d="M701.8 594.3L715.3 590.9L715.3 615.6C713.4 624.3 704.7 628.2 693.1 629.3L693.1 589.4z" fill="url(#fg)" stroke="#141414" stroke-width="0.8"/>
<line x1="701.8" y1="611.7" x2="715.3" y2="608.3" stroke="#333" stroke-width="0.7" />
<polygon points="690.1,588.9 702.7,585.8 715.5,590.9 701.8,594.5" fill="#8a8a8a" stroke="#141414" stroke-width="0.8" />
<polygon points="693.5,589.2 702.5,587.3 710.5,590.6 701.6,592.9" fill="#5a5a5a" stroke="#222" stroke-width="0.5" />
<ellipse cx="685.8" cy="608.8" rx="15.6" ry="20.6" fill="#666" stroke="#0c0c0c" stroke-width="1.5" transform="rotate(-10 685.8 608.8)"/>
<ellipse cx="682.4" cy="608.3" rx="8.6" ry="15" fill="#111" transform="rotate(-10 682.4 608.3)"/>
<path d="M690.6 598.1C695.5 606.9 694.5 618.5 690.1 625.3" fill="none" stroke="#111" stroke-width="1"/>
<polygon points="664.2,617.0 666.1,617.0 666.1,636.9 664.2,636.9" fill="#3a3a3a" stroke="#141414" stroke-width="0.5" />
<polygon points="672.9,617.0 674.8,617.0 674.8,637.9 672.9,637.9" fill="#cfcfcf" stroke="#141414" stroke-width="0.5" />
<polygon points="676.6,617.0 678.5,617.0 678.5,637.9 676.6,637.9" fill="#4a4a4a" stroke="#141414" stroke-width="0.5" />
<polygon points="686.5,617.0 688.4,617.0 688.4,635.9 686.5,635.9" fill="#bdbdbd" stroke="#141414" stroke-width="0.5" />
<polygon points="664.0,616.7 672.2,615.6 689.7,617.3 680.5,619.0" fill="#a8a8a8" stroke="#141414" stroke-width="0.6" />
<line x1="665.9" y1="632.1" x2="687.2" y2="628.2" stroke="#9a9a9a" stroke-width="1" />
<polygon points="674.6,602.5 685.3,601.2 687.7,614.1 677.5,616.1" fill="#0e0e0e" />
<polygon points="676.6,602.0 683.4,600.9 684.3,603.5 677.5,604.7" fill="#cfcfcf" stroke="#222" stroke-width="0.4" />
<ellipse cx="670.0" cy="609.6" rx="6.4" ry="7.6" fill="#d4d4d4" stroke="#141414" stroke-width="0.7" transform="rotate(-18 670.0 609.6)"/>
<ellipse cx="667.1" cy="610.2" rx="4.2" ry="6.2" fill="#8a8a8a" stroke="#1a1a1a" stroke-width="0.8" transform="rotate(-18 667.1 610.2)"/>
<ellipse cx="662.5" cy="603.0" rx="3" ry="4" fill="none" stroke="#1a1a1a" stroke-width="1.3"/><polygon points="1273.0,496.5 1275.1,496.5 1275.1,506.2 1273.0,506.2" fill="#1e1e1e" />
<polygon points="1291.2,499.4 1293.5,499.4 1293.5,512.0 1291.2,512.0" fill="#1e1e1e" />
<polygon points="1327.3,495.5 1330.2,495.5 1330.2,502.3 1327.3,502.3" fill="#1e1e1e" />
<polygon points="1271.5,495.3 1301.1,487.7 1322.9,490.7 1323.4,492.8 1293.3,499.9 1271.5,497.0" fill="#2a2a2a" stroke="#141414" stroke-width="0.5" />
<polygon points="1274.9,495.3 1301.1,489.2 1318.5,491.1 1293.3,497.6" fill="#7c7c7c" stroke="#1a1a1a" stroke-width="0.5" />
<path d="M1317.6 452.9L1331.1 449.5L1331.1 474.2C1329.2 482.9 1320.5 486.8 1308.9 487.9L1308.9 448.0z" fill="url(#fg)" stroke="#141414" stroke-width="0.8"/>
<line x1="1317.6" y1="470.3" x2="1331.1" y2="466.9" stroke="#333" stroke-width="0.7" />
<polygon points="1305.9,447.5 1318.5,444.4 1331.3,449.5 1317.6,453.1" fill="#8a8a8a" stroke="#141414" stroke-width="0.8" />
<polygon points="1309.3,447.8 1318.3,445.9 1326.3,449.2 1317.4,451.5" fill="#5a5a5a" stroke="#222" stroke-width="0.5" />
<ellipse cx="1301.6" cy="467.4" rx="15.6" ry="20.6" fill="#666" stroke="#0c0c0c" stroke-width="1.5" transform="rotate(-10 1301.6 467.4)"/>
<ellipse cx="1298.2" cy="466.9" rx="8.6" ry="15" fill="#111" transform="rotate(-10 1298.2 466.9)"/>
<path d="M1306.4 456.7C1311.3 465.5 1310.3 477.1 1305.9 483.9" fill="none" stroke="#111" stroke-width="1"/>
<polygon points="1280.0,475.6 1281.9,475.6 1281.9,495.5 1280.0,495.5" fill="#3a3a3a" stroke="#141414" stroke-width="0.5" />
<polygon points="1288.7,475.6 1290.6,475.6 1290.6,496.5 1288.7,496.5" fill="#cfcfcf" stroke="#141414" stroke-width="0.5" />
<polygon points="1292.4,475.6 1294.3,475.6 1294.3,496.5 1292.4,496.5" fill="#4a4a4a" stroke="#141414" stroke-width="0.5" />
<polygon points="1302.3,475.6 1304.2,475.6 1304.2,494.5 1302.3,494.5" fill="#bdbdbd" stroke="#141414" stroke-width="0.5" />
<polygon points="1279.8,475.3 1288.0,474.2 1305.5,475.9 1296.3,477.6" fill="#a8a8a8" stroke="#141414" stroke-width="0.6" />
<line x1="1281.7" y1="490.7" x2="1303.0" y2="486.8" stroke="#9a9a9a" stroke-width="1" />
<polygon points="1290.4,461.1 1301.1,459.8 1303.5,472.7 1293.3,474.7" fill="#0e0e0e" />
<polygon points="1292.4,460.6 1299.2,459.5 1300.1,462.1 1293.3,463.3" fill="#cfcfcf" stroke="#222" stroke-width="0.4" />
<ellipse cx="1285.8" cy="468.2" rx="6.4" ry="7.6" fill="#d4d4d4" stroke="#141414" stroke-width="0.7" transform="rotate(-18 1285.8 468.2)"/>
<ellipse cx="1282.9" cy="468.8" rx="4.2" ry="6.2" fill="#8a8a8a" stroke="#1a1a1a" stroke-width="0.8" transform="rotate(-18 1282.9 468.8)"/>
<ellipse cx="1278.3" cy="461.6" rx="3" ry="4" fill="none" stroke="#1a1a1a" stroke-width="1.3"/>
<defs><radialGradient id="sg" cx="0.4" cy="0.35" r="0.7"><stop offset="0" stop-color="#fff79a"/><stop offset="0.6" stop-color="#f2d84a"/><stop offset="1" stop-color="#b89b2a"/></radialGradient><linearGradient id="gy" x1="0" y1="0" x2="1" y2="0"><stop offset="0" stop-color="#58b45c"/><stop offset="0.5" stop-color="#8fdc8f"/><stop offset="1" stop-color="#4aa24e"/></linearGradient></defs>
<rect x="431.9" y="918" width="4.2" height="38" fill="url(#gy)"/>
<path d="M434 903.6L438.4 921H429.6z" fill="#6cc870"/><path d="M434 903.6L434.4 921H429.6z" fill="#9be09b"/><path d="M434 903.6v8" stroke="#fff" stroke-width="0.8"/>
<path d="M431 957.4L406 963.4L406.8 967.4L431.6 961.6z" fill="#3a86e0"/>
<path d="M393.4 967.2L405.6 960.6L407.6 970.4z" fill="#5a9cf0"/><path d="M393.4 967.2L406.6 965.6L407.6 970.4z" fill="#2f72cc"/>
<path d="M436.6 957.4L458 963.4L457 967.6L436 961.6z" fill="#e65050"/>
<path d="M470.4 970L457.6 961.6L455.6 971.2z" fill="#f06a6a"/><path d="M470.4 970L456.6 966.4L455.6 971.2z" fill="#cc3c3c"/>
<circle cx="433.8" cy="958.6" r="5.2" fill="url(#sg)"/>
<text x="430.4" y="901.2" font-family="Liberation Serif, serif" font-size="11" fill="#3fae46">Y</text>
<text x="382.6" y="973.6" font-family="Liberation Serif, serif" font-size="11" fill="#3f78e0">Z</text>
<text x="471" y="976.6" font-family="Liberation Serif, serif" font-size="11" fill="#e04848">X</text></svg>
<!-- top -->
<div class="b" style="left:0px;top:0px;width:1920px;height:25px;background:#e7e7e7;"></div>
<div class="b" style="left:0px;top:24px;width:1920px;height:1px;background:#d0d0d0;"></div>
<div class="b" style="left:3px;top:2px;width:20px;height:20px;background:#2b2b33;border:1px solid #19b5e6;box-sizing:border-box;"></div>
<svg class="b" style="left:3px;top:2px;" width="20" height="20" viewBox="0 0 20 20"><circle cx="10.4" cy="9.9" r="8" fill="none" stroke="#21b8ea" stroke-width="1.3"/><path d="M6.2 5V16 M6.6 11.4L13 5.6 M8.2 9.4L16.2 16.6" stroke="#21b8ea" stroke-width="1.4" fill="none"/></svg>
<span class="t" style="left:32.00px;top:6.00px;font-size:13px;line-height:13px;color:#2e2e2e;transform:scaleX(0.8852);">Файл</span>
<span class="t" style="left:72.80px;top:6.00px;font-size:13px;line-height:13px;color:#2e2e2e;transform:scaleX(0.8925);">Правка</span>
<span class="t" style="left:125.00px;top:6.00px;font-size:13px;line-height:13px;color:#2e2e2e;transform:scaleX(0.8752);">Выделить</span>
<span class="t" style="left:190.00px;top:6.00px;font-size:13px;line-height:13px;color:#2e2e2e;transform:scaleX(0.8287);">Вид</span>
<span class="t" style="left:221.50px;top:6.00px;font-size:13px;line-height:13px;color:#2e2e2e;transform:scaleX(0.8917);">Эскиз</span>
<span class="t" style="left:265.00px;top:6.00px;font-size:13px;line-height:13px;color:#2e2e2e;transform:scaleX(0.9200);">Моделирование</span>
<span class="t" style="left:366.50px;top:6.00px;font-size:13px;line-height:13px;color:#2e2e2e;transform:scaleX(0.9101);">Сборка</span>
<span class="t" style="left:420.00px;top:6.00px;font-size:13px;line-height:13px;color:#2e2e2e;transform:scaleX(0.9107);">Оформление</span>
<span class="t" style="left:505.50px;top:6.00px;font-size:13px;line-height:13px;color:#2e2e2e;transform:scaleX(0.9221);">Диагностика</span>
<span class="t" style="left:587.50px;top:6.00px;font-size:13px;line-height:13px;color:#2e2e2e;transform:scaleX(0.9131);">Управление</span>
<span class="t" style="left:666.00px;top:6.00px;font-size:13px;line-height:13px;color:#2e2e2e;transform:scaleX(0.9062);">Настройка</span>
<span class="t" style="left:737.00px;top:6.00px;font-size:13px;line-height:13px;color:#2e2e2e;transform:scaleX(0.9374);">Приложения</span>
<span class="t" style="left:821.00px;top:6.00px;font-size:13px;line-height:13px;color:#2e2e2e;transform:scaleX(0.9266);">Окно</span>
<span class="t" style="left:862.00px;top:6.00px;font-size:13px;line-height:13px;color:#2e2e2e;transform:scaleX(0.8824);">Справка</span>
<svg class="b" style="left:1578px;top:5px;" width="18" height="14" viewBox="0 0 18 14"><rect x="1" y="1.5" width="15.5" height="11" fill="none" stroke="#2a2a2a" stroke-width="1.2"/><rect x="1" y="1" width="15.5" height="2" fill="#2a2a2a"/></svg>
<svg class="b" style="left:1604px;top:5px;" width="18" height="14" viewBox="0 0 18 14"><rect x="1" y="1.5" width="15.5" height="11" fill="none" stroke="#2a2a2a" stroke-width="1.2"/><rect x="1" y="1" width="15.5" height="2" fill="#2a2a2a"/><circle cx="8.8" cy="8" r="2.2" fill="none" stroke="#2a2a2a" stroke-width="1.7"/><path d="M8.8 4.2v7.6M5 8h7.600M6.100 5.300l5.400 5.400M11.500 5.300L6.100 10.700" stroke="#2a2a2a" stroke-width="1.3"/></svg>
<div class="b" style="left:1631px;top:2px;width:190px;height:21px;background:#fff;border:1px solid #c6c6c6;box-sizing:border-box;"></div>
<svg class="b" style="left:1636px;top:5px;" width="16" height="16" viewBox="0 0 16 16"><circle cx="9.3" cy="6.3" r="3.7" fill="none" stroke="#9a9a9a" stroke-width="1.3"/><path d="M6.6 9L2.6 13.2" stroke="#9a9a9a" stroke-width="1.6"/></svg>
<span class="t" style="left:1656.10px;top:6.20px;font-size:13px;line-height:13px;color:#a6a6a6;transform:scaleX(0.9531);">Поиск по командам (Alt+/)</span>
<div class="b" style="left:1836px;top:13px;width:12px;height:2px;background:#222;"></div>
<svg class="b" style="left:1864px;top:4px;" width="18" height="15" viewBox="0 0 18 15"><rect x="2.6" y="5.4" width="10.4" height="7.2" fill="none" stroke="#222" stroke-width="1.5"/><path d="M5.2 5V2.7h10.4v7.2h-2.4" fill="none" stroke="#222" stroke-width="1.5"/></svg>
<svg class="b" style="left:1897px;top:6px;" width="14" height="12" viewBox="0 0 14 12"><path d="M2.2 2.4L11.6 10.4M11.6 2.4L2.2 10.4" stroke="#222" stroke-width="2.1"/></svg>
<div class="b" style="left:0px;top:25px;width:1920px;height:21px;background:#b3b3b3;"></div>
<div class="b" style="left:0px;top:25px;width:1920px;height:1px;background:#858585;"></div>
<div class="b" style="left:0px;top:46px;width:1920px;height:6px;background:#6b6b6b;"></div>
<div class="b" style="left:0px;top:26px;width:1px;height:20px;background:#727272;"></div>
<div class="b" style="left:47px;top:26px;width:1px;height:20px;background:#727272;"></div>
<div class="b" style="left:215px;top:26px;width:1px;height:20px;background:#727272;"></div>
<div class="b" style="left:383px;top:26px;width:1px;height:20px;background:#727272;"></div>
<div class="b" style="left:553px;top:26px;width:1px;height:20px;background:#727272;"></div>
<div class="b" style="left:722px;top:26px;width:1px;height:20px;background:#727272;"></div>
<div class="b" style="left:891px;top:25px;width:170px;height:22px;background:#6b6b6b;"></div>
<svg class="b" style="left:6px;top:28px;" width="16" height="16" viewBox="0 0 16 16"><path d="M1.5 8.2L7.6 1.6l6.1 6.6v6.3h-4v-4.2h-4.2v4.2h-4z" fill="#2c2c2c"/><rect x="3" y="2" width="2" height="4" fill="#2c2c2c"/></svg>
<svg class="b" style="left:30px;top:32px;" width="12" height="8" viewBox="0 0 12 8"><path d="M2.5 2h8L6.5 6z" fill="#2c2c2c"/></svg>
<svg class="b" style="left:52px;top:28px;" width="18" height="16" viewBox="0 0 18 16"><rect x="1" y="1.5" width="15" height="13" fill="none" stroke="#2c2c2c" stroke-width="1.2"/><path d="M3.3 6.8l2-2h4.4v4H5.3z M9.7 5.6h3.6v5.4h-3.6" fill="none" stroke="#2c2c2c" stroke-width="1.1"/><rect x="9" y="10.6" width="6.5" height="3" fill="#2c2c2c"/></svg>
<span class="t" style="left:72.50px;top:31.00px;font-size:13px;line-height:13px;color:#2c2c2c;transform:scaleX(0.8769);">Воздухоподогревате…</span>
<svg class="b" style="left:221px;top:28px;" width="18" height="16" viewBox="0 0 18 16"><rect x="1" y="1.5" width="15" height="13" fill="none" stroke="#2c2c2c" stroke-width="1.2"/><path d="M3.3 6.8l2-2h4.4v4H5.3z M9.7 5.6h3.6v5.4h-3.6" fill="none" stroke="#2c2c2c" stroke-width="1.1"/><rect x="9" y="10.6" width="6.5" height="3" fill="#2c2c2c"/></svg>
<span class="t" style="left:241.50px;top:31.00px;font-size:13px;line-height:13px;color:#2c2c2c;transform:scaleX(0.9078);">СФО-40.cdw</span>
<svg class="b" style="left:389px;top:27px;" width="19" height="18" viewBox="0 0 19 18"><path d="M2 15.5V5.2l3.2-3.4h6.6l4.2 4.4v6l-3 3.3z" fill="none" stroke="#2c2c2c" stroke-width="1.3"/><path d="M3.6 14V6.6h7l3.4 3v4.4z" fill="none" stroke="#2c2c2c" stroke-width="1.1"/><circle cx="8.6" cy="11.2" r="2.5" fill="none" stroke="#2c2c2c" stroke-width="1.3"/><path d="M13.5 15.3l4.3-3.3" stroke="#2c2c2c" stroke-width="1.2"/></svg>
<span class="t" style="left:410.50px;top:31.00px;font-size:13px;line-height:13px;color:#2c2c2c;transform:scaleX(0.8974);">Калорифер.a3d</span>
<svg class="b" style="left:559px;top:28px;" width="18" height="16" viewBox="0 0 18 16"><rect x="1" y="1.5" width="15" height="13" fill="none" stroke="#2c2c2c" stroke-width="1.2"/><path d="M3.3 6.8l2-2h4.4v4H5.3z M9.7 5.6h3.6v5.4h-3.6" fill="none" stroke="#2c2c2c" stroke-width="1.1"/><rect x="9" y="10.6" width="6.5" height="3" fill="#2c2c2c"/></svg>
<span class="t" style="left:579.50px;top:31.00px;font-size:13px;line-height:13px;color:#2c2c2c;transform:scaleX(0.9070);">Котел водогрейный…</span>
<svg class="b" style="left:728px;top:27px;" width="19" height="18" viewBox="0 0 19 18"><path d="M2 15.5V5.2l3.2-3.4h6.6l4.2 4.4v6l-3 3.3z" fill="none" stroke="#2c2c2c" stroke-width="1.3"/><path d="M3.6 14V6.6h7l3.4 3v4.4z" fill="none" stroke="#2c2c2c" stroke-width="1.1"/><circle cx="8.6" cy="11.2" r="2.5" fill="none" stroke="#2c2c2c" stroke-width="1.3"/><path d="M13.5 15.3l4.3-3.3" stroke="#2c2c2c" stroke-width="1.2"/></svg>
<span class="t" style="left:748.50px;top:31.00px;font-size:13px;line-height:13px;color:#2c2c2c;transform:scaleX(0.8329);">05.0105.00.01.000 - Ф…</span>
<svg class="b" style="left:896px;top:27px;" width="19" height="18" viewBox="0 0 19 18"><path d="M2 15.5V5.2l3.2-3.4h6.6l4.2 4.4v6l-3 3.3z" fill="none" stroke="#fff" stroke-width="1.3"/><path d="M3.6 14V6.6h7l3.4 3v4.4z" fill="none" stroke="#fff" stroke-width="1.1"/><circle cx="8.6" cy="11.2" r="2.5" fill="none" stroke="#fff" stroke-width="1.3"/><path d="M13.5 15.3l4.3-3.3" stroke="#fff" stroke-width="1.2"/></svg>
<span class="t" style="left:917.50px;top:31.00px;font-size:13px;line-height:13px;color:#fff;transform:scaleX(0.8394);">ТБГ 150.00.00.000 - И…</span>
<svg class="b" style="left:1043px;top:31px;" width="12" height="12" viewBox="0 0 12 12"><path d="M2 2l8 8M10 2l-8 8" stroke="#fff" stroke-width="1.6"/></svg>
<!-- ribbon -->
<div class="b" style="left:0px;top:52px;width:1920px;height:75px;background:#f0f0f0;"></div>
<div class="b" style="left:0px;top:127px;width:1572px;height:16px;background:#e6e6e6;"></div>
<div class="b" style="left:1572px;top:127px;width:348px;height:16px;background:#efefef;"></div>
<div class="b" style="left:0px;top:143px;width:1920px;height:2px;background:#5a5a5a;"></div>
<div class="b" style="left:120px;top:52px;width:1px;height:91px;background:#bdbdbd;"></div>
<div class="b" style="left:199px;top:52px;width:1px;height:91px;background:#bdbdbd;"></div>
<div class="b" style="left:252px;top:52px;width:1px;height:91px;background:#bdbdbd;"></div>
<div class="b" style="left:305px;top:52px;width:1px;height:91px;background:#bdbdbd;"></div>
<div class="b" style="left:358px;top:52px;width:1px;height:91px;background:#bdbdbd;"></div>
<div class="b" style="left:479px;top:52px;width:1px;height:91px;background:#bdbdbd;"></div>
<div class="b" style="left:532px;top:52px;width:1px;height:91px;background:#bdbdbd;"></div>
<div class="b" style="left:611px;top:52px;width:1px;height:91px;background:#bdbdbd;"></div>
<div class="b" style="left:716px;top:52px;width:1px;height:91px;background:#bdbdbd;"></div>
<div class="b" style="left:795px;top:52px;width:1px;height:91px;background:#bdbdbd;"></div>
<div class="b" style="left:848px;top:52px;width:1px;height:91px;background:#bdbdbd;"></div>
<div class="b" style="left:969px;top:52px;width:1px;height:91px;background:#bdbdbd;"></div>
<div class="b" style="left:1210px;top:52px;width:1px;height:91px;background:#bdbdbd;"></div>
<div class="b" style="left:1571px;top:52px;width:1px;height:91px;background:#bdbdbd;"></div>
<div class="b" style="left:0px;top:52px;width:120px;height:25px;background:#4b4b4b;"></div>
<svg class="b" style="left:4px;top:55px" width="20" height="20" viewBox="0 0 20 20"><g transform="translate(1.2 1.6) scale(0.84)"><path d="M1.6 16.6V6L5.4 1.6h7.2L17.4 6.6V12l-4 4.6z" fill="none" stroke="#3b97d9" stroke-width="1.5"/><path d="M3.6 14.6V7.4h7.6l3.6 3v4.2z" fill="none" stroke="#3b97d9" stroke-width="1.2"/><circle cx="8.4" cy="11.6" r="2.6" fill="none" stroke="#3b97d9" stroke-width="1.5"/><path d="M13.4 16.6l5-3.8" stroke="#3b97d9" stroke-width="1.3"/></g></svg>
<span class="t" style="left:25.80px;top:57.00px;font-size:13px;line-height:13px;color:#fff;transform:scaleX(0.9146);">Сборка</span>
<svg class="b" style="left:6px;top:80px" width="18" height="18" viewBox="0 0 18 18"><path d="M1 1.6h10.4l3 3V17H1z" fill="#a9d3ee"/><path d="M11.4 1.6v3h3z" fill="#e4f0fa"/><rect x="3" y="5" width="9.4" height="10.4" fill="#2779bd"/><path d="M3 7.6h9.4M3 10.2h9.4M3 12.8h9.4M6.1 5v10.4M9.3 5v10.4" stroke="#dcebf7" stroke-width="0.9"/></svg>
<span class="t" style="left:25.80px;top:82.00px;font-size:13px;line-height:13px;color:#1c1c1c;transform:scaleX(0.9089);">Управление</span>
<svg class="b" style="left:5px;top:106px" width="18" height="18" viewBox="0 0 18 18"><path d="M0.6 5L4 1.6h13L13.6 5z" fill="#3b97d9"/><rect x="0.6" y="5" width="13" height="12" fill="#a9d3ee"/><path d="M13.6 5L17 1.6v11.8L13.6 17z" fill="#2779bd"/></svg>
<span class="t" style="left:25.80px;top:101.80px;font-size:13px;line-height:13px;color:#1c1c1c;transform:scaleX(0.9044);">Твердотельное</span>
<span class="t" style="left:25.80px;top:112.50px;font-size:13px;line-height:13px;color:#1c1c1c;transform:scaleX(0.9209);">моделирование</span>
<svg class="b" style="left:56px;top:131px;" width="9" height="9" viewBox="0 0 9 9"><path d="M1 1.2L4.5 4 8 1.2M1 4.8L4.5 7.6 8 4.8" fill="none" stroke="#333" stroke-width="1"/></svg>
<svg class="b" style="left:126px;top:56px" width="16" height="16" viewBox="0 0 16 16"><path d="M2 0h6l6 6v10H2z" fill="#a9d3ee"/><path d="M8 0v6h6z" fill="#2779bd"/></svg>
<svg class="b" style="left:152px;top:56px" width="16" height="16" viewBox="0 0 16 16"><path d="M1 1.4h4.6l1.4 1.6h6.4v3H1z" fill="#ff8a00"/><path d="M0.3 3v10.6h1.4V3z" fill="#2779bd"/><path d="M2.6 5.2H16l-2.3 8.4H0.4z" fill="#2779bd"/></svg>
<svg class="b" style="left:178px;top:56px" width="16" height="16" viewBox="0 0 16 16"><path d="M0.6 0.6h12.4l2.4 2.4v12.4H0.6z" fill="#f6f6f6" stroke="#c9c9c9" stroke-width="1.1"/><rect x="3.6" y="0.8" width="8.4" height="5" fill="#c9c9c9"/><rect x="9.2" y="1" width="1.8" height="4" fill="#f6f6f6"/><rect x="3" y="9" width="10" height="6.2" fill="#f6f6f6" stroke="#c9c9c9" stroke-width="1"/></svg>
<svg class="b" style="left:126px;top:81px" width="16" height="16" viewBox="0 0 16 16"><rect x="2.6" y="0.6" width="10.8" height="5" fill="#fff" stroke="#2779bd" stroke-width="1.2"/><rect x="0" y="5" width="16" height="7.2" rx="0.8" fill="#2779bd"/><rect x="2.6" y="9.6" width="10.8" height="5.8" fill="#a9d3ee" stroke="#2779bd" stroke-width="1.2"/></svg>
<svg class="b" style="left:152px;top:81px" width="16" height="16" viewBox="0 0 16 16"><path d="M5 0h5.6L16 5.4V16H5z" fill="#3b97d9"/><path d="M10.6 0v5.4H16z" fill="#a9d3ee"/><circle cx="7.6" cy="8.2" r="3.6" fill="#a9d3ee" stroke="#2779bd" stroke-width="1.3"/><path d="M5 11L1 15" stroke="#2779bd" stroke-width="2"/></svg>
<svg class="b" style="left:178px;top:81px" width="16" height="16" viewBox="0 0 16 16"><path d="M0 0h13l3 3v13H0z" fill="#2779bd"/><rect x="4" y="0" width="7.6" height="5.2" fill="#3b97d9"/><rect x="9" y="0.8" width="1.8" height="3.6" fill="#fff"/><rect x="2.6" y="9" width="10.8" height="7" fill="#a9d3ee"/><path d="M8.2 13.8l1-2.6 4.6-4.6 1.8 1.8-4.7 4.6z" fill="#ff8a00"/><circle cx="9.3" cy="12.8" r="0.7" fill="#fff"/></svg>
<svg class="b" style="left:126px;top:106px" width="16" height="16" viewBox="0 0 16 16"><path d="M0.6 6.6L6.4 1v3.6c5.4 0 9 3.4 9 9.4-1.6-3.6-4.6-5-9-5v3.6z" fill="#f3f3f3" stroke="#dedede" stroke-width="1"/></svg>
<svg class="b" style="left:152px;top:106px" width="16" height="16" viewBox="0 0 16 16"><path d="M15.4 6.6L9.6 1v3.6c-5.4 0-9 3.4-9 9.4 1.6-3.6 4.6-5 9-5v3.6z" fill="#f3f3f3" stroke="#dedede" stroke-width="1"/></svg>
<svg class="b" style="left:205px;top:56px" width="16" height="16" viewBox="0 0 16 16"><path d="M0 4.2L3.6 0H9v4.2z" fill="#3b97d9"/><rect x="0" y="4.2" width="12.6" height="11.6" fill="#a9d3ee"/><path d="M12.6 6.5H16v6l-3.4 3.3z" fill="#2779bd"/><circle cx="7" cy="9.6" r="4.6" fill="#3b97d9"/><circle cx="8.6" cy="8" r="3.4" fill="#e8f2fa"/><path d="M10.2 0.8h2l0.8 0.9h3v4.6h-5.8z" fill="#2779bd"/><rect x="9.6" y="0" width="0.9" height="7" fill="#f0f0f0"/><rect x="9.6" y="6.3" width="6.6" height="0.9" fill="#f0f0f0"/><path d="M12.8 17.8h5.8V12.4z" fill="#1e1e26"/></svg>
<svg class="b" style="left:231px;top:56px" width="16" height="16" viewBox="0 0 16 16"><path d="M0 4.2L3.6 0H9v4.2z" fill="#3b97d9"/><rect x="0" y="4.2" width="12.6" height="11.6" fill="#a9d3ee"/><path d="M12.6 6.5H16v6l-3.4 3.3z" fill="#2779bd"/><circle cx="7" cy="9.6" r="4.6" fill="#3b97d9"/><circle cx="8.6" cy="8" r="3.4" fill="#e8f2fa"/><path d="M13 0v5.6M10.2 2.8h5.6" stroke="#2779bd" stroke-width="1.3"/><path d="M12.8 17.8h5.8V12.4z" fill="#1e1e26"/></svg>
<svg class="b" style="left:205px;top:81px" width="16" height="16" viewBox="0 0 16 16"><rect x="0" y="0" width="7" height="6.4" fill="#a9d3ee"/><rect x="2.2" y="1.8" width="3" height="3" fill="#f0f0f0"/><path d="M0.4 15.6L11 4.4" stroke="#2779bd" stroke-width="1.1"/><path d="M13.4 0v5.6M10.6 2.8h5.6" stroke="#ff8a00" stroke-width="1.2"/><rect x="9.6" y="9.4" width="6" height="6" fill="#f0f0f0" stroke="#2779bd" stroke-width="1.2"/><circle cx="12.6" cy="12.4" r="1.5" fill="none" stroke="#2779bd" stroke-width="1"/></svg>
<svg class="b" style="left:231px;top:81px" width="16" height="16" viewBox="0 0 16 16"><path d="M10.2 0.6h2l0.8 0.9h3v3.6h-5.8z" fill="#3b97d9"/><path d="M7.6 0.4c-2 0-3 1-3 3M3 3l1.7 2 1.7-2z" stroke="#ff8a00" stroke-width="1.2" fill="#ff8a00"/><rect x="0.7" y="8" width="8.2" height="7.4" rx="1" fill="#2779bd"/><rect x="2" y="9.6" width="5.6" height="4.6" fill="#e6f1fa"/><circle cx="4.8" cy="11.9" r="1.5" fill="none" stroke="#2779bd" stroke-width="1"/><path d="M11.6 11.8c2 0 2.8-1 2.8-3M12.6 8.6l1.8-2 1.7 2z" stroke="#ff8a00" stroke-width="1.1" fill="#ff8a00"/></svg>
<svg class="b" style="left:258px;top:56px" width="16" height="16" viewBox="0 0 16 16"><path d="M7 0h6v6H7z" fill="#a9d3ee"/><path d="M8.6 0h4.6v7H8.6z" fill="#e4f0fa"/><path d="M0.6 9.6L5 6.4h3v3.2z" fill="#2779bd"/><path d="M12.4 9.6L16 6.2v5.6l-3.6 3.6z" fill="#2779bd"/><rect x="0.7" y="9.6" width="11.6" height="5.6" fill="#fff" stroke="#2779bd" stroke-width="1.2"/><path d="M12.8 17.8h5.8V12.4z" fill="#1e1e26"/></svg>
<svg class="b" style="left:284px;top:56px" width="16" height="16" viewBox="0 0 16 16"><ellipse cx="10.4" cy="6" rx="5" ry="5.6" fill="#2779bd"/><ellipse cx="11.4" cy="6" rx="3.6" ry="4.6" fill="#f3f8fc"/><path d="M11 6h2" stroke="#2779bd" stroke-width="0.9"/><circle cx="3.6" cy="12" r="3.5" fill="#a9d3ee"/><circle cx="4.6" cy="12" r="1.8" fill="#f3f8fc"/><circle cx="4.8" cy="12" r="0.6" fill="#2779bd"/><path d="M12.8 17.8h5.8V12.4z" fill="#1e1e26"/></svg>
<svg class="b" style="left:258px;top:81px" width="16" height="16" viewBox="0 0 16 16"><rect x="5" y="0.6" width="9" height="8.4" fill="#f4f4f4" stroke="#c9c9c9" stroke-width="1.1"/><path d="M5 9L3.6 11.2" stroke="#c9c9c9" stroke-width="1.1"/><circle cx="3.6" cy="11.6" r="1.3" fill="none" stroke="#c9c9c9"/><path d="M0.4 13.4h6.8M1 15.6l1-2M3 15.6l1-2M5 15.6l1-2M7 15.6l1-2" stroke="#c9c9c9" stroke-width="1"/></svg>
<svg class="b" style="left:284px;top:81px" width="16" height="16" viewBox="0 0 16 16"><rect x="0.6" y="0.6" width="9" height="9" fill="#f4f4f4" stroke="#c9c9c9" stroke-width="1.1"/><path d="M12.6 0.8c3.6 3 3.6 8 0.6 10.8" fill="none" stroke="#dedede" stroke-width="1.1"/><path d="M1 13.8h10M1 13.8l2.4-1.6M1 13.8l2.4 1.6M11 13.8l-2.4-1.6M11 13.8l-2.4 1.6" stroke="#dedede" stroke-width="1"/></svg>
<svg class="b" style="left:258px;top:106px" width="16" height="16" viewBox="0 0 16 16"><path d="M2 2h12M2 2l2.6-1.8M2 2l2.6 1.8M14 2l-2.6-1.8M14 2l-2.6 1.8" stroke="#2779bd" stroke-width="1.2" fill="none"/><rect x="2" y="6.6" width="8.6" height="9" fill="#a9d3ee"/><path d="M2 6.6l2-1.6h8.6l-2 1.6z" fill="#3b97d9"/><path d="M10.6 6.6l2-1.6v9l-2 1.6z" fill="#2779bd"/><path d="M12.8 17.8h5.8V12.4z" fill="#1e1e26"/></svg>
<svg class="b" style="left:311px;top:56px" width="16" height="16" viewBox="0 0 16 16"><defs><pattern id="hz" width="1.6" height="1.6" patternUnits="userSpaceOnUse"><rect width="1.6" height="1.6" fill="#cfe6f6"/><rect width="0.8" height="0.8" fill="#3b97d9"/><rect x="0.8" y="0.8" width="0.8" height="0.8" fill="#3b97d9"/></pattern></defs><rect x="0" y="0.4" width="16" height="15" fill="url(#hz)"/><rect x="0" y="0" width="16" height="1.2" fill="#2779bd"/><path d="M4.6 1v10.6l2 3.6h2.8l2-3.6V1z" fill="#fff" stroke="#2779bd" stroke-width="1.2"/><path d="M5 11.6h6" stroke="#2779bd" stroke-width="1"/><path d="M12.8 17.8h5.8V12.4z" fill="#1e1e26"/></svg>
<svg class="b" style="left:337px;top:56px" width="16" height="16" viewBox="0 0 16 16"><path d="M0 2.6L2.6 0H16l-2.6 2.6z" fill="#3b97d9"/><path d="M13.4 2.6L16 0v13l-2.6 2.8z" fill="#2779bd"/><rect x="0" y="2.6" width="13.4" height="13.2" fill="#a9d3ee"/><rect x="3" y="5.6" width="7.6" height="7.4" fill="#3b97d9"/><rect x="5.4" y="5.6" width="5.2" height="5" fill="#eef6fc"/><path d="M12.8 17.8h5.8V12.4z" fill="#1e1e26"/></svg>
<svg class="b" style="left:311px;top:81px" width="16" height="16" viewBox="0 0 16 16"><path d="M0 3L3.4 0H16l-3 3z" fill="#3b97d9"/><rect x="0" y="3" width="6" height="13" fill="#a9d3ee"/><path d="M6 3.4l1.6-1.4V14.4L6 16z" fill="#2779bd"/><rect x="7.6" y="3" width="5.6" height="11.4" fill="#a9d3ee"/><path d="M13.2 3L16 0v11.6l-2.8 2.8z" fill="#2779bd"/></svg>
<svg class="b" style="left:337px;top:81px" width="16" height="16" viewBox="0 0 16 16"><path d="M1.6 2.6L4.2 0H16l-2.6 2.6z" fill="#3b97d9"/><path d="M13.4 2.6L16 0v10.6l-2.6 2.8z" fill="#2779bd"/><rect x="1.6" y="2.6" width="11.8" height="11" fill="#a9d3ee"/><path d="M0 9.4l3-3h6.6l-2.4 3z" fill="#3b97d9"/><path d="M7.2 9.4l2.4-3v6.4l-2.4 3z" fill="#2779bd"/><rect x="0" y="9.4" width="7.2" height="6.4" fill="#ff8a00"/><path d="M12.8 17.8h5.8V12.4z" fill="#1e1e26"/></svg>
<svg class="b" style="left:364px;top:56px" width="16" height="16" viewBox="0 0 16 16"><circle cx="2" cy="2" r="1.6" fill="#a9d3ee" stroke="#3b97d9" stroke-width="1"/><circle cx="2" cy="8" r="1.6" fill="#a9d3ee" stroke="#3b97d9" stroke-width="1"/><circle cx="2" cy="14" r="1.6" fill="#a9d3ee" stroke="#3b97d9" stroke-width="1"/><circle cx="8" cy="2" r="1.6" fill="#a9d3ee" stroke="#3b97d9" stroke-width="1"/><circle cx="8" cy="8" r="1.6" fill="#a9d3ee" stroke="#3b97d9" stroke-width="1"/><circle cx="8" cy="14" r="1.6" fill="#a9d3ee" stroke="#3b97d9" stroke-width="1"/><circle cx="14" cy="2" r="1.6" fill="#a9d3ee" stroke="#3b97d9" stroke-width="1"/><circle cx="14" cy="8" r="1.6" fill="#a9d3ee" stroke="#3b97d9" stroke-width="1"/><circle cx="14" cy="14" r="1.6" fill="#f0f0f0" stroke="#3b97d9" stroke-width="1"/><path d="M12.8 17.8h5.8V12.4z" fill="#1e1e26"/></svg>
<svg class="b" style="left:364px;top:81px" width="16" height="16" viewBox="0 0 16 16"><ellipse cx="5.4" cy="9.6" rx="4.8" ry="6" fill="none" stroke="#ff8a00" stroke-width="1.1" stroke-dasharray="2.2 1.4"/><path d="M7.4 2.6v9.6a4.2 1.8 0 0 0 8.4 0V2.6" fill="#f3f8fc" stroke="#2779bd" stroke-width="1.1"/><ellipse cx="11.6" cy="2.6" rx="4.2" ry="2.2" fill="#2779bd"/></svg>
<svg class="b" style="left:364px;top:106px" width="16" height="16" viewBox="0 0 16 16"><path d="M3.4 6.6a2.4 2.4 0 1 1 2-3.6c1.4 2.4-1.6 4-1 6.4" fill="none" stroke="#2779bd" stroke-width="1.1"/><circle cx="13" cy="2.8" r="2.8" fill="#a9d3ee"/><circle cx="12.2" cy="2" r="1" fill="#f3f8fc"/><path d="M0 15.6L5.6 11h6.6l3.6 2.4-3.4 2.2z" fill="#3b97d9"/><path d="M5.6 11l3-4.4 6.8 6.4-3.4-2z" fill="#3b97d9"/><circle cx="5.6" cy="13.8" r="0.7" fill="#fff"/><circle cx="8.6" cy="14.6" r="0.7" fill="#fff"/></svg>
<span class="t" style="left:385.10px;top:57.00px;font-size:13px;line-height:13px;color:#1c1c1c;transform:scaleX(0.9114);">Массив по сетке</span>
<span class="t" style="left:385.10px;top:76.80px;font-size:13px;line-height:13px;color:#1c1c1c;transform:scaleX(0.9114);">Копировать</span>
<span class="t" style="left:385.10px;top:87.50px;font-size:13px;line-height:13px;color:#1c1c1c;transform:scaleX(0.9067);">объекты</span>
<span class="t" style="left:385.10px;top:101.80px;font-size:13px;line-height:13px;color:#1c1c1c;transform:scaleX(0.9183);">Коллекция</span>
<span class="t" style="left:385.10px;top:112.50px;font-size:13px;line-height:13px;color:#1c1c1c;transform:scaleX(0.9237);">геометрии</span>
<svg class="b" style="left:485px;top:56px" width="16" height="16" viewBox="0 0 16 16"><path d="M6.4 0v10.4" stroke="#ff8a00" stroke-width="1.1"/><rect x="7" y="2.6" width="5.6" height="5.6" fill="#a9d3ee"/><path d="M2.4 6.4l4-3.6v7.2l-4 3.8z" fill="#2779bd"/><path d="M2.4 13.6l4-3.2h7l-4 3.2z" fill="#3b97d9"/><path d="M0 15.6L6.4 10.2H16" stroke="#ff8a00" stroke-width="1.1" fill="none"/><path d="M12.8 17.8h5.8V12.4z" fill="#1e1e26"/></svg>
<svg class="b" style="left:511px;top:56px" width="16" height="16" viewBox="0 0 16 16"><path d="M6.4 2.6V10M6.4 10H0.6M6.4 10h6.2" stroke="#2779bd" stroke-width="1.1" fill="none"/><circle cx="6.4" cy="1.8" r="1.6" fill="#fff" stroke="#3b97d9" stroke-width="1"/><circle cx="14" cy="10" r="1.6" fill="#fff" stroke="#3b97d9" stroke-width="1"/><path d="M10 1.6h2l0.8 0.9h3v3.4H10z" fill="#2779bd"/><rect x="0" y="10.6" width="5.6" height="5" fill="#a9d3ee"/><path d="M0 10.6l1-1h5.6l-1 1z" fill="#3b97d9"/><path d="M5.6 10.6l1-1v5l-1 1z" fill="#2779bd"/><rect x="1.6" y="12.4" width="1.6" height="1.6" fill="#3b97d9"/></svg>
<svg class="b" style="left:485px;top:81px" width="16" height="16" viewBox="0 0 16 16"><path d="M4 0h12l-4 4.6H0z" fill="#ff8a00"/><path d="M4 11h12l-4 4.6H0z" fill="#a9d3ee"/><path d="M12.8 17.8h5.8V12.4z" fill="#1e1e26"/></svg>
<svg class="b" style="left:511px;top:81px" width="16" height="16" viewBox="0 0 16 16"><path d="M6 4.6V2.2h2.2V0h3.6v2.2H14v5H6z" fill="#3b97d9"/><path d="M8.2 1.6L10 4.4l1.8-2.8z" fill="#f0f0f0"/><path d="M12.6 7h3.2v3.2h-3.2z" fill="#2779bd"/><rect x="0.6" y="7.4" width="11.4" height="8" fill="#f3f8fc" stroke="#2779bd" stroke-width="1.2"/><ellipse cx="5.6" cy="11.4" rx="1.7" ry="1.9" fill="none" stroke="#2779bd" stroke-width="1.2"/><path d="M12.8 17.8h5.8V12.4z" fill="#1e1e26"/></svg>
<svg class="b" style="left:485px;top:106px" width="16" height="16" viewBox="0 0 16 16"><path d="M0 15.6L16 0" stroke="#ff8a00" stroke-width="1.1"/><circle cx="5.2" cy="10.6" r="1.7" fill="#f3f8fc" stroke="#3b97d9" stroke-width="1.1"/><circle cx="11.2" cy="4.6" r="1.7" fill="#f3f8fc" stroke="#3b97d9" stroke-width="1.1"/><path d="M12.8 17.8h5.8V12.4z" fill="#1e1e26"/></svg>
<svg class="b" style="left:538px;top:56px" width="16" height="16" viewBox="0 0 16 16"><path d="M0.6 0v11M15.4 0v8" stroke="#2779bd" stroke-width="1.1"/><path d="M1 1.8h14M1 1.8l2.6-1.2v2.4zM15 1.8l-2.6-1.2v2.4z" stroke="#ff8a00" stroke-width="1" fill="#ff8a00"/><path d="M0 11.6l3.4-2.8H16L12.6 11.6z" fill="#3b97d9"/><rect x="0" y="11.6" width="12.6" height="4" fill="#a9d3ee"/><path d="M12.6 11.6L16 8.8v4l-3.4 2.8z" fill="#2779bd"/></svg>
<svg class="b" style="left:564px;top:56px" width="16" height="16" viewBox="0 0 16 16"><ellipse cx="8" cy="11.4" rx="8" ry="4.4" fill="#a9d3ee"/><ellipse cx="8" cy="9.6" rx="8" ry="4.4" fill="#3b97d9"/><path d="M3.6 12L12 5.6M3.6 12l2.6-0.6-1.2-1.6z" stroke="#ff8a00" stroke-width="1.1" fill="#ff8a00"/><circle cx="13" cy="2.8" r="2.5" fill="#f3f8fc" stroke="#2779bd" stroke-width="1"/><path d="M11.4 4.4l3.2-3.2" stroke="#2779bd" stroke-width="1"/></svg>
<svg class="b" style="left:590px;top:56px" width="16" height="16" viewBox="0 0 16 16"><ellipse cx="8" cy="6" rx="8" ry="5" fill="#3b97d9"/><path d="M0 6v4a8 4.6 0 0 0 16 0V6z" fill="#a9d3ee"/><ellipse cx="8" cy="5" rx="8" ry="4.8" fill="#3b97d9"/><path d="M8 3.4l4.6 4.6-4.6 0-4.6 0z" fill="#a9d3ee"/><path d="M0.6 14L8 6.4 15.4 14" stroke="#2779bd" stroke-width="1.3" fill="none"/><path d="M3.6 13.4c2.4 2.8 6.4 2.8 8.8 0" stroke="#ff8a00" stroke-width="1.1" fill="none"/></svg>
<svg class="b" style="left:538px;top:81px" width="16" height="16" viewBox="0 0 16 16"><ellipse cx="8" cy="11.2" rx="8" ry="4.4" fill="#a9d3ee"/><ellipse cx="8" cy="9.4" rx="8" ry="4.4" fill="#3b97d9"/><path d="M7.4 9.8l3.8-3" stroke="#ff8a00" stroke-width="1.2"/><path d="M12.4 5.8V0.6h1.8c1.6 0 1.6 2.6 0 2.6h-1.8M14 3.2l1.6 2.6" stroke="#2779bd" stroke-width="1" fill="none"/></svg>
<svg class="b" style="left:564px;top:81px" width="16" height="16" viewBox="0 0 16 16"><path d="M1 1.6h9M1 1.6l2-1v2zM10 1.6l-2-1v2zM5.4 0.4v2.4" stroke="#ff8a00" stroke-width="1" fill="#ff8a00"/><path d="M10.4 0v16" stroke="#2779bd" stroke-width="1.2"/><rect x="0" y="4.6" width="10" height="10" fill="#a9d3ee"/><path d="M0 4.6h10" stroke="#3b97d9" stroke-width="1.2"/><circle cx="5" cy="10" r="2.3" fill="#f3f8fc"/><path d="M1.6 6.6l6.6 7" stroke="#ff8a00" stroke-width="0.9" stroke-dasharray="1.2 1"/><path d="M10.4 5h5.4M10.4 15.4h5.4" stroke="#2779bd" stroke-width="1.2"/><path d="M13.8 6v8.4M13.8 6l-1.2 2.2h2.4zM13.8 14.6l-1.2-2.2h2.4z" stroke="#ff8a00" stroke-width="1" fill="#ff8a00"/></svg>
<svg class="b" style="left:590px;top:81px" width="16" height="16" viewBox="0 0 16 16"><path d="M4.6 0.6c-2 0-3.6 1.2-3.6 3M0.4 3.4h3.4M1 3.6l2.6 2.6" stroke="#2779bd" stroke-width="1.1" fill="none"/><path d="M7.4 0v7.4M7.4 0.4l8.4 7v8.2H8.6L0.6 7.4h6.8M7.4 7.4l8.4 8.2" stroke="#2779bd" stroke-width="1.1" fill="none"/><path d="M9 2.6l6 5M1.6 9.4l6 5.6" stroke="#ff8a00" stroke-width="1.1" stroke-dasharray="1.6 1"/></svg>
<svg class="b" style="left:538px;top:106px" width="16" height="16" viewBox="0 0 16 16"><path d="M2.6 0v9M15.4 0v9" stroke="#2779bd" stroke-width="1.1"/><path d="M3 3.8c3.4-2 8.6-2 12 0M3 3.8l2.8-1.6 0.2 2.6zM15 3.8l-2.8-1.6-0.2 2.6z" stroke="#ff8a00" stroke-width="1" fill="#ff8a00"/><path d="M0 11.8l3.4-3.4c3-2 7-2 10 0L16 8.8v4l-3.2 2.6H0z" fill="#a9d3ee"/><path d="M0 11.6l3.4-3.2c3-2 7-2 10 0l2.6 0.4-3.2 2.8z" fill="#3b97d9"/><path d="M12.8 11.6L16 8.8v4l-3.2 2.6z" fill="#2779bd"/></svg>
<svg class="b" style="left:617px;top:56px" width="16" height="16" viewBox="0 0 16 16"><path d="M1.2 9.6L10.6 0.8l4.8 4.4-9.6 9z" fill="#3b97d9"/><path d="M10.6 0.8c2.6-1.4 6 2 4.8 4.4z" fill="#2779bd"/><path d="M6.6 5.2c1.6 0.4 3.4 2 4.2 3.8M8.4 3.6c1.6 0.4 3.4 2 4.2 3.8M10 2c1.6 0.4 3.4 2 4.2 3.8" stroke="#e8f3fb" stroke-width="0.9" fill="none"/><ellipse cx="3.8" cy="12" rx="3.9" ry="3.6" fill="#a9d3ee"/></svg>
<svg class="b" style="left:643px;top:56px" width="16" height="16" viewBox="0 0 16 16"><path d="M5 3.4h7.6a3 5 0 0 1 0 10H5" fill="#f3f8fc" stroke="#2779bd" stroke-width="1.2"/><ellipse cx="5" cy="8.4" rx="2.6" ry="5" fill="#2779bd"/><ellipse cx="5.2" cy="8.4" rx="1.3" ry="3.2" fill="#f3f8fc"/><path d="M0 8.4h16" stroke="#ff8a00" stroke-width="1.1" stroke-dasharray="4 1 1.4 1"/></svg>
<svg class="b" style="left:669px;top:56px" width="16" height="16" viewBox="0 0 16 16"><path d="M16 0.4h-4.4L7 11" stroke="#ff8a00" stroke-width="1.1" fill="none"/><path d="M6.6 11.6l0.6-2.8 1.8 0.8z" fill="#ff8a00"/><path d="M3 11h13l-2.6 3.2H0z" fill="#3b97d9"/><path d="M0 14.2h13.4v1.5H0z" fill="#a9d3ee"/><path d="M13.4 14.2L16 11v1.5l-2.6 3.2z" fill="#2779bd"/></svg>
<svg class="b" style="left:695px;top:56px" width="16" height="16" viewBox="0 0 16 16"><path d="M9.6 1L7 11" stroke="#ff8a00" stroke-width="1.1" fill="none"/><path d="M15.6 0.6h-5v6h5M10.6 3.6h4" stroke="#ff8a00" stroke-width="1.2" fill="none"/><path d="M6.6 11.6l0.6-2.8 1.8 0.8z" fill="#ff8a00"/><path d="M3 11h13l-2.6 3.2H0z" fill="#3b97d9"/><path d="M0 14.2h13.4v1.5H0z" fill="#a9d3ee"/><path d="M13.4 14.2L16 11v1.5l-2.6 3.2z" fill="#2779bd"/></svg>
<svg class="b" style="left:617px;top:81px" width="16" height="16" viewBox="0 0 16 16"><path d="M3.4 6.6h5.4L6.2 11.2zM6.2 11.2L15.6 0" stroke="#ff8a00" stroke-width="1.1" fill="none"/><path d="M3 11h13l-2.6 3.2H0z" fill="#3b97d9"/><path d="M0 14.2h13.4v1.5H0z" fill="#a9d3ee"/><path d="M13.4 14.2L16 11v1.5l-2.6 3.2z" fill="#2779bd"/></svg>
<svg class="b" style="left:643px;top:81px" width="16" height="16" viewBox="0 0 16 16"><rect x="3.2" y="0.4" width="6.4" height="6.6" fill="#fff4e6" stroke="#ff8a00" stroke-width="1.1"/><path d="M5 5.6L6.4 1.8l1.4 3.8M5.5 4.4h1.8" stroke="#ff8a00" stroke-width="0.8" fill="none"/><path d="M6.4 7v4M4.8 11h3.2" stroke="#ff8a00" stroke-width="1.2"/><path d="M3 11h13l-2.6 3.2H0z" fill="#3b97d9"/><path d="M0 14.2h13.4v1.5H0z" fill="#a9d3ee"/><path d="M13.4 14.2L16 11v1.5l-2.6 3.2z" fill="#2779bd"/></svg>
<svg class="b" style="left:669px;top:81px" width="16" height="16" viewBox="0 0 16 16"><rect x="6.4" y="0.4" width="9.2" height="4.8" fill="#fff4e6" stroke="#ff8a00" stroke-width="1.1"/><path d="M9.4 0.4v4.8M12.4 0.4v4.8M6.4 0.4V11" stroke="#ff8a00" stroke-width="1.1"/><path d="M5 11h3" stroke="#ff8a00" stroke-width="1.4"/><path d="M3 11h13l-2.6 3.2H0z" fill="#3b97d9"/><path d="M0 14.2h13.4v1.5H0z" fill="#a9d3ee"/><path d="M13.4 14.2L16 11v1.5l-2.6 3.2z" fill="#2779bd"/></svg>
<svg class="b" style="left:695px;top:81px" width="16" height="16" viewBox="0 0 16 16"><path d="M4.4 7.4L9.2 0.6 14 7.4z" fill="#fff4e6" stroke="#ff8a00" stroke-width="1"/><path d="M9.2 2.6v8.4M9.2 10.8l-1.6-2.2h3.2zM7 6.4h4.4" stroke="#ff8a00" stroke-width="1.1" fill="#ff8a00"/><path d="M3 11h13l-2.6 3.2H0z" fill="#3b97d9"/><path d="M0 14.2h13.4v1.5H0z" fill="#a9d3ee"/><path d="M13.4 14.2L16 11v1.5l-2.6 3.2z" fill="#2779bd"/><path d="M12.8 17.8h5.8V12.4z" fill="#1e1e26"/></svg>
<svg class="b" style="left:617px;top:106px" width="16" height="16" viewBox="0 0 16 16"><path d="M0.6 0.6h14.8v3.2h-1c-0.3-1.4-0.8-2-2.2-2H9.6v11.4c0 1 0.6 1.4 2 1.5v0.9H4.4v-0.9c1.4-0.1 2-0.5 2-1.5V1.8H3.8c-1.4 0-1.9 0.6-2.2 2h-1z" fill="#2779bd"/></svg>
<svg class="b" style="left:643px;top:106px" width="16" height="16" viewBox="0 0 16 16"><rect x="0.6" y="0.6" width="14.8" height="14.8" fill="#f3f8fc" stroke="#3b97d9" stroke-width="1.2"/><path d="M0.6 4h14.8" stroke="#3b97d9" stroke-width="1.2"/><path d="M2.4 2.4h3M6.6 2.4h3M10.8 2.4h3" stroke="#3b97d9" stroke-width="1.1"/><path d="M2.4 6.6h3M6.6 6.6h3M10.8 6.6h3" stroke="#3b97d9" stroke-width="1.1"/><path d="M2.4 9h3M6.6 9h3M10.8 9h3" stroke="#3b97d9" stroke-width="1.1"/><path d="M2.4 11.4h3M6.6 11.4h3M10.8 11.4h3" stroke="#3b97d9" stroke-width="1.1"/><path d="M2.4 13.6h3M6.6 13.6h3M10.8 13.6h3" stroke="#3b97d9" stroke-width="1.1"/></svg>
<svg class="b" style="left:722px;top:56px" width="16" height="16" viewBox="0 0 16 16"><path d="M0.8 0.8L5.8 7M5.8 7V2.6M5.8 7L1.6 6.2" stroke="#3b97d9" stroke-width="1.1" fill="none"/><path d="M4 9.6h12L12.6 15.4H0.4z" fill="none" stroke="#2779bd" stroke-width="1.2"/><circle cx="13" cy="9.4" r="0.8" fill="#ff8a00"/><path d="M11.6 2.0c0-2.4 3.8-2.4 3.8 0 0 1.6-1.9 1.6-1.9 3.6" stroke="#ff8a00" stroke-width="1.1" fill="none"/><circle cx="13.5" cy="7.4" r="0.75" fill="#ff8a00"/></svg>
<svg class="b" style="left:748px;top:56px" width="16" height="16" viewBox="0 0 16 16"><path d="M0.6 7.6L8 3.2M4.4 4.6l2 6M5.2 3.6l1.6 3" stroke="#3b97d9" stroke-width="1" fill="none"/><path d="M4 9.6h12L12.6 15.4H0.4zM6.4 12h6" fill="none" stroke="#2779bd" stroke-width="1.1"/><circle cx="13" cy="9.4" r="0.8" fill="#ff8a00"/><path d="M11.6 2.0c0-2.4 3.8-2.4 3.8 0 0 1.6-1.9 1.6-1.9 3.6" stroke="#ff8a00" stroke-width="1.1" fill="none"/><circle cx="13.5" cy="7.4" r="0.75" fill="#ff8a00"/><path d="M12.8 17.8h5.8V12.4z" fill="#1e1e26"/></svg>
<svg class="b" style="left:774px;top:56px" width="16" height="16" viewBox="0 0 16 16"><path d="M0 0.6c1.6 3 6 4 9.8 3.4v4c-4.4 0.6-8.4-2-9.8-7.4z" fill="#a9d3ee"/><path d="M0.4 15c2-6.6 13.4-6.6 15.4 0l-1.6-1c-2.6-4-9.6-4-12 0z" fill="#2779bd"/><path d="M0.4 15.6c2-5 13.4-5 15.4 0" stroke="#2779bd" stroke-width="1.4" fill="none"/><path d="M11.4 2.0c0-2.4 3.8-2.4 3.8 0 0 1.6-1.9 1.6-1.9 3.6" stroke="#ff8a00" stroke-width="1.1" fill="none"/><circle cx="13.3" cy="7.4" r="0.75" fill="#ff8a00"/></svg>
<svg class="b" style="left:722px;top:81px" width="16" height="16" viewBox="0 0 16 16"><path d="M0 3.8L4 0h6v4.6h6v8.2l-3.6 3z" fill="#2779bd"/><path d="M0 3.8L4 0h6L6.6 3.8z" fill="#3b97d9"/><path d="M6.6 8.4L10 4.6h6l-3.6 3.8z" fill="#3b97d9"/><path d="M0 3.8h6.6v4.6h5.8v7.4H0z" fill="#a9d3ee"/></svg>
<svg class="b" style="left:748px;top:81px" width="16" height="16" viewBox="0 0 16 16"><path d="M0.4 15c2-4 13.2-4 15.2 0" stroke="#2779bd" stroke-width="1.6" fill="none"/><path d="M8 10.6V2M8 1l-1.6 2.8h3.2zM8 11l-1.6-2.6h3.2z" stroke="#ff8a00" stroke-width="1" fill="#ff8a00"/><path d="M3.6 10.6L1.2 4M1 3l0 3.2 2.4-1.4zM12.4 10.6L14.8 4M15 3l0 3.2-2.4-1.4z" stroke="#ff8a00" stroke-width="1" fill="#ff8a00"/><path d="M4 10.4L3 7.6l2.2 0.2zM12 10.4l1-2.8-2.2 0.2z" fill="#ff8a00"/></svg>
<svg class="b" style="left:774px;top:81px" width="16" height="16" viewBox="0 0 16 16"><path d="M4.6 3.2L8 0h5v8.6h3v4.2l-3.4 3H1.4v-4.4L4.6 8.6z" fill="#2779bd"/><path d="M4.6 3.2L8 0h5L10 3.2z" fill="#3b97d9"/><rect x="4.6" y="3.2" width="5.4" height="7" fill="#a9d3ee"/><path d="M0.6 11.4l3-2.8h1v2.8z" fill="#3b97d9"/><rect x="1.4" y="11.4" width="11.2" height="4.4" fill="#a9d3ee"/><rect x="4.4" y="10" width="5.4" height="2.8" fill="#ff8a00"/></svg>
<svg class="b" style="left:722px;top:106px" width="16" height="16" viewBox="0 0 16 16"><path d="M0.4 10.6C3 8 4 2 6.4 2.6c2.6 0.6 2.4 8 9 10.4" stroke="#3b97d9" stroke-width="1" fill="none"/><path d="M1.6 12.4C4 10 5 4 7.2 4.6c2.4 0.6 2 7 8 9.6M3 13.4c2-2 3-7 5-6.4 1.6 0.5 2 5.6 6.4 8" stroke="#3b97d9" stroke-width="0.9" fill="none"/><path d="M2.2 9l2.4 2.6M3.6 6l2.6 3M5 3.4l2.6 3M7.6 4.6l1.4 4M9.6 8.4l0.2 3.2M12 11.4l-0.6 2" stroke="#3b97d9" stroke-width="0.7"/><path d="M12.8 17.8h5.8V12.4z" fill="#1e1e26"/></svg>
<svg class="b" style="left:748px;top:106px" width="16" height="16" viewBox="0 0 16 16"><path d="M0.6 0.4C1 8 5 13.6 15.4 14.6" stroke="#2779bd" stroke-width="1.1" fill="none"/><path d="M3 8.6c3 1.6 4.6 4.6 4.6 4.6" stroke="#3b97d9" stroke-width="0.9" fill="none"/><circle cx="4.6" cy="10.2" r="1.3" fill="#f3f8fc" stroke="#3b97d9" stroke-width="0.9"/><path d="M9.6 3.2c-2.6-2-5 0-5 2.4 0 3 3.2 4 5.2 2.4V5.6H7.6" stroke="#2779bd" stroke-width="1.2" fill="none"/><path d="M11.6 2.8c0-2.4 3.8-2.4 3.8 0 0 1.6-1.9 1.6-1.9 3.6" stroke="#ff8a00" stroke-width="1.1" fill="none"/><circle cx="13.5" cy="8.2" r="0.75" fill="#ff8a00"/></svg>
<svg class="b" style="left:801px;top:56px" width="16" height="16" viewBox="0 0 16 16"><rect x="0.6" y="2.6" width="14.8" height="12.8" fill="#f3f8fc" stroke="#3b97d9" stroke-width="1.2"/><path d="M3 7l1.8-1.6h4v3.2h-4zM8.8 6.2h3.4v4.2H8.6" stroke="#2779bd" stroke-width="1" fill="none"/><rect x="8.8" y="11.6" width="6.6" height="3.8" fill="#fff" stroke="#3b97d9" stroke-width="1.1"/><rect x="9" y="0" width="7" height="6.6" fill="#ff8a00"/><path d="M10.6 1.6h3.8M12.5 1.6v4" stroke="#fff" stroke-width="1.3"/></svg>
<svg class="b" style="left:827px;top:56px" width="16" height="16" viewBox="0 0 16 16"><path d="M9.4 0.6h4l2.2 2.2v6.6H9.4z" fill="#f3f8fc" stroke="#3b97d9" stroke-width="1.1"/><path d="M6.6 0.6c-2.4 0-3.4 1-3.4 3M1.6 3.4l1.7 2 1.7-2z" stroke="#ff8a00" stroke-width="1.1" fill="#ff8a00"/><rect x="0.6" y="6.4" width="7.4" height="9.2" fill="#2779bd"/><path d="M0.6 8.8h7.4M0.6 11.2h7.4M0.6 13.4h7.4M3.2 6.4v9.2M5.6 6.4v9.2" stroke="#dcebf7" stroke-width="0.9"/></svg>
<svg class="b" style="left:801px;top:81px" width="16" height="16" viewBox="0 0 16 16"><rect x="0.6" y="5" width="14.8" height="10.4" fill="#f3f8fc" stroke="#3b97d9" stroke-width="1.2"/><rect x="2.6" y="7.6" width="6" height="2.8" fill="#fff" stroke="#3b97d9" stroke-width="1.1"/><rect x="9.6" y="12" width="5.8" height="3.4" fill="#fff" stroke="#3b97d9" stroke-width="1.1"/><path d="M9.6 0h2l0.8 0.9h3.4v5H9.6z" fill="#f0f0f0"/><path d="M10.4 0.2h2l0.8 0.9h2.6v3.6h-5.4z" fill="#2779bd"/></svg>
<svg class="b" style="left:827px;top:81px" width="16" height="16" viewBox="0 0 16 16"><rect x="0.6" y="4" width="9.6" height="11.6" fill="#3b97d9"/><path d="M0.6 6.3h9.6M0.6 8.6h9.6M0.6 10.9h9.6M0.6 13.2h9.6" stroke="#e8f3fb" stroke-width="0.9"/><path d="M3.6 4v11.6" stroke="#e8f3fb" stroke-width="0.7"/><path d="M9.6 0h2l0.8 0.9h3.4v5H9.6z" fill="#f0f0f0"/><path d="M10.4 0.2h2l0.8 0.9h2.6v3.6h-5.4z" fill="#2779bd"/></svg>
<svg class="b" style="left:854px;top:56px" width="16" height="16" viewBox="0 0 16 16"><path d="M0.6 3.6L4.4 0.4h9L9.6 3.6z" fill="#3b97d9"/><path d="M0.6 3.6h9v2.2H6.6v5.8h3v3.8h-9v-3.8h3V5.8h-3z" fill="#a9d3ee"/><path d="M9.6 3.6L13.4 0.4v2.2L9.6 5.8z" fill="#2779bd"/><path d="M6.6 5.8l3-2.4v7.2l-3 1z" fill="#2779bd"/><path d="M9.6 11.6l1.6-1.4v3.8l-1.6 1.4z" fill="#2779bd"/><path d="M16 10.4c-1 2.4-3.4 2.6-5.4 2.4M8.6 12.8l2.8-2.4v4.6z" stroke="#ff8a00" stroke-width="1.2" fill="#ff8a00"/></svg>
<svg class="b" style="left:854px;top:81px" width="16" height="16" viewBox="0 0 16 16"><path d="M0.6 3.6L4.4 0.4h9L9.6 3.6z" fill="#c6c6c6"/><path d="M0.6 3.6h9v2.2H6.6v5.8h3v3.8h-9v-3.8h3V5.8h-3z" fill="#d9d9d9"/><path d="M9.6 3.6L13.4 0.4v2.2L9.6 5.8z" fill="#cfcfcf"/><path d="M6.6 5.8l3-2.4v7.2l-3 1z" fill="#cfcfcf"/><path d="M9.6 11.6l1.6-1.4v3.8l-1.6 1.4z" fill="#cfcfcf"/><circle cx="10.8" cy="10.4" r="4.8" fill="#f3f3f3" stroke="#c9c9c9" stroke-width="1.1"/><path d="M10.8 9.4v4" stroke="#c9c9c9" stroke-width="1.4"/><circle cx="10.8" cy="7.4" r="0.9" fill="#c9c9c9"/></svg>
<svg class="b" style="left:854px;top:106px" width="16" height="16" viewBox="0 0 16 16"><path d="M0.6 3.6L4.4 0.4h9L9.6 3.6z" fill="#c6c6c6"/><path d="M0.6 3.6h9v2.2H6.6v5.8h3v3.8h-9v-3.8h3V5.8h-3z" fill="#d9d9d9"/><path d="M9.6 3.6L13.4 0.4v2.2L9.6 5.8z" fill="#cfcfcf"/><path d="M6.6 5.8l3-2.4v7.2l-3 1z" fill="#cfcfcf"/><path d="M9.6 11.6l1.6-1.4v3.8l-1.6 1.4z" fill="#cfcfcf"/><path d="M7 11.2c0.8-2.4 4.6-3 6.2-0.4M14.6 9.4l-0.8 2.4-2.2-1.2M13.6 13.2c-1 2-4.6 2.4-6 0.4M5.8 15l0.8-2.6 2.4 1" stroke="#c9c9c9" stroke-width="1" fill="none"/></svg>
<span class="t" style="left:874.80px;top:51.90px;font-size:13px;line-height:13px;color:#1c1c1c;transform:scaleX(0.8955);">Выбрать</span>
<span class="t" style="left:874.80px;top:62.75px;font-size:13px;line-height:13px;color:#1c1c1c;transform:scaleX(0.8605);">материал…</span>
<span class="t" style="left:874.80px;top:76.80px;font-size:13px;line-height:13px;color:#c4c4c4;transform:scaleX(0.9227);">Информация о</span>
<span class="t" style="left:874.80px;top:87.50px;font-size:13px;line-height:13px;color:#c4c4c4;transform:scaleX(0.8551);">материале…</span>
<span class="t" style="left:874.80px;top:101.80px;font-size:13px;line-height:13px;color:#c4c4c4;transform:scaleX(0.9079);">Обновить</span>
<span class="t" style="left:874.80px;top:112.50px;font-size:13px;line-height:13px;color:#c4c4c4;transform:scaleX(0.8729);">данные по мат…</span>
<svg class="b" style="left:975px;top:56px" width="16" height="16" viewBox="0 0 16 16"><path d="M5.4 4.4L9 0.6c1.6-1 3.6 0.8 2.8 2.4L8.4 7z" fill="#3b97d9"/><path d="M6.6 3.2l2 2M7.8 2l2 2M9 0.8l2 2" stroke="#a9d3ee" stroke-width="0.6"/><path d="M0.6 6.2l2-2.2h3.6l2 2.2v4.4l-2 2H2.6l-2-2z" fill="#a9d3ee"/><path d="M6.2 4l2 2.2v4.4l-2 2z" fill="#2779bd"/><path d="M2.6 4h3.6l1 1H1.6z" fill="#3b97d9"/><path d="M12 7.4v8M8 11.4h8" stroke="#2779bd" stroke-width="1.7"/></svg>
<svg class="b" style="left:975px;top:81px" width="16" height="16" viewBox="0 0 16 16"><path d="M5.4 4.4L9 0.6c1.6-1 3.6 0.8 2.8 2.4L8.4 7z" fill="#3b97d9"/><path d="M6.6 3.2l2 2M7.8 2l2 2M9 0.8l2 2" stroke="#a9d3ee" stroke-width="0.6"/><path d="M0.6 6.2l2-2.2h3.6l2 2.2v4.4l-2 2H2.6l-2-2z" fill="#a9d3ee"/><path d="M6.2 4l2 2.2v4.4l-2 2z" fill="#2779bd"/><path d="M2.6 4h3.6l1 1H1.6z" fill="#3b97d9"/><ellipse cx="8.4" cy="3.4" rx="3.4" ry="3" fill="#3b97d9"/><ellipse cx="9" cy="3" rx="2" ry="1.6" fill="#a9d3ee"/><path d="M12 7.4v8M8 11.4h8" stroke="#2779bd" stroke-width="1.7"/></svg>
<svg class="b" style="left:975px;top:106px" width="16" height="16" viewBox="0 0 16 16"><path d="M5.4 4.4L9 0.6c1.6-1 3.6 0.8 2.8 2.4L8.4 7z" fill="#3b97d9"/><path d="M6.6 3.2l2 2M7.8 2l2 2M9 0.8l2 2" stroke="#a9d3ee" stroke-width="0.6"/><path d="M0.6 6.2l2-2.2h3.6l2 2.2v4.4l-2 2H2.6l-2-2z" fill="#a9d3ee"/><path d="M6.2 4l2 2.2v4.4l-2 2z" fill="#2779bd"/><path d="M2.6 4h3.6l1 1H1.6z" fill="#3b97d9"/><path d="M6 11c1-2.4 5-3 6.8-0.4M14.2 8.8l-0.7 2.6-2.5-1M13.4 13c-1.2 2-5 2.4-6.6 0.2M5.4 15l0.8-2.6 2.6 0.8" stroke="#2779bd" stroke-width="1.2" fill="none"/></svg>
<svg class="b" style="left:1095px;top:56px" width="16" height="16" viewBox="0 0 16 16"><defs><pattern id="hx" width="2.6" height="2.6" patternUnits="userSpaceOnUse" patternTransform="rotate(45)"><rect width="2.6" height="2.6" fill="#f3f8fc"/><rect width="0.5" height="2.6" fill="#3b97d9"/></pattern></defs><rect x="0.6" y="0.6" width="14.8" height="14.8" fill="url(#hx)" stroke="#3b97d9" stroke-width="1.2"/><rect x="4" y="4" width="8" height="8.6" fill="#f3f8fc" stroke="#3b97d9" stroke-width="1"/><path d="M0.6 0.6L4 4M15.4 0.6L12 4M0.6 15.4L4 12.6" stroke="#3b97d9" stroke-width="0.9"/><rect x="7.4" y="8.4" width="9" height="8" fill="#f0f0f0"/><path d="M12 8v8M8 12h8" stroke="#2779bd" stroke-width="1.7"/></svg>
<svg class="b" style="left:1095px;top:81px" width="16" height="16" viewBox="0 0 16 16"><path d="M5 5.6L10.4 0.8c2-1.2 4.6 1 3.6 3L8.6 9z" fill="#3b97d9"/><path d="M7 4l2.6 2.6M8.6 2.6l2.6 2.6M10.2 1.2l2.6 2.6" stroke="#a9d3ee" stroke-width="0.6"/><path d="M0.4 7.4L3 6h5v6l-2.2 3.6H2.8L0.4 13z" fill="#a9d3ee"/><path d="M0.4 7.4L3 6h5L6 7.4z" fill="#3b97d9"/><circle cx="9.8" cy="9.8" r="3.2" fill="#fff" stroke="#ff8a00" stroke-width="1.3"/><path d="M12 12.2l1.6 1.6" stroke="#ff8a00" stroke-width="1.4"/><path d="M12.8 17.8h5.8V12.4z" fill="#1e1e26"/></svg>
<span class="t" style="left:995.75px;top:51.90px;font-size:13px;line-height:13px;color:#1c1c1c;transform:scaleX(0.8665);">Вставить</span>
<span class="t" style="left:995.75px;top:62.75px;font-size:13px;line-height:13px;color:#1c1c1c;transform:scaleX(0.8986);">элемент</span>
<span class="t" style="left:995.75px;top:76.80px;font-size:13px;line-height:13px;color:#1c1c1c;transform:scaleX(0.8665);">Вставить</span>
<span class="t" style="left:995.75px;top:87.50px;font-size:13px;line-height:13px;color:#1c1c1c;transform:scaleX(0.8963);">крепежное со…</span>
<span class="t" style="left:995.75px;top:101.80px;font-size:13px;line-height:13px;color:#1c1c1c;transform:scaleX(0.9079);">Обновить</span>
<span class="t" style="left:995.75px;top:112.50px;font-size:13px;line-height:13px;color:#1c1c1c;transform:scaleX(0.8649);">данные по изд…</span>
<span class="t" style="left:1116.10px;top:51.90px;font-size:13px;line-height:13px;color:#1c1c1c;transform:scaleX(0.8601);">Вставить</span>
<span class="t" style="left:1116.10px;top:62.75px;font-size:13px;line-height:13px;color:#1c1c1c;transform:scaleX(0.8970);">конструктивн…</span>
<span class="t" style="left:1116.10px;top:76.80px;font-size:13px;line-height:13px;color:#1c1c1c;transform:scaleX(0.8982);">Найти и</span>
<span class="t" style="left:1116.10px;top:87.50px;font-size:13px;line-height:13px;color:#1c1c1c;transform:scaleX(0.8582);">заменить стан…</span>
<span class="t" style="left:1219.80px;top:57.13px;font-size:14.5px;line-height:14.5px;color:#2e86c8;transform:scaleX(0.7712);">О</span>
<span class="t" style="left:1214.90px;top:82.33px;font-size:14.5px;line-height:14.5px;color:#2e86c8;transform:scaleX(0.7770);">ОН</span>
<span class="t" style="left:1214.90px;top:107.53px;font-size:14.5px;line-height:14.5px;color:#2e86c8;transform:scaleX(0.7490);">ОО</span>
<span class="t" style="left:1237.00px;top:57.00px;font-size:13px;line-height:13px;color:#1c1c1c;transform:scaleX(0.8487);">OiSMK.exe</span>
<span class="t" style="left:1237.00px;top:76.80px;font-size:13px;line-height:13px;color:#1c1c1c;transform:scaleX(0.8907);">Основная</span>
<span class="t" style="left:1237.00px;top:87.50px;font-size:13px;line-height:13px;color:#1c1c1c;transform:scaleX(0.8585);">надпись для ч…</span>
<span class="t" style="left:1237.00px;top:101.80px;font-size:13px;line-height:13px;color:#1c1c1c;transform:scaleX(0.9012);">Обработка</span>
<span class="t" style="left:1237.00px;top:112.50px;font-size:13px;line-height:13px;color:#1c1c1c;transform:scaleX(0.9052);">отчётов.py</span>
<span class="t" style="left:1340.10px;top:57.13px;font-size:14.5px;line-height:14.5px;color:#2e86c8;transform:scaleX(0.8754);">К</span>
<span class="t" style="left:1335.50px;top:82.33px;font-size:14.5px;line-height:14.5px;color:#2e86c8;transform:scaleX(0.8993);">КВ</span>
<span class="t" style="left:1340.10px;top:107.53px;font-size:14.5px;line-height:14.5px;color:#2e86c8;transform:scaleX(0.8754);">К</span>
<span class="t" style="left:1357.00px;top:57.00px;font-size:13px;line-height:13px;color:#1c1c1c;transform:scaleX(0.9268);">КМД.py</span>
<span class="t" style="left:1357.00px;top:76.80px;font-size:13px;line-height:13px;color:#1c1c1c;transform:scaleX(0.8914);">Крепёж в</span>
<span class="t" style="left:1357.00px;top:87.50px;font-size:13px;line-height:13px;color:#1c1c1c;transform:scaleX(0.8982);">марках.py</span>
<span class="t" style="left:1357.00px;top:107.00px;font-size:13px;line-height:13px;color:#1c1c1c;transform:scaleX(0.9105);">Калькулятор</span>
<span class="t" style="left:1460.10px;top:57.13px;font-size:14.5px;line-height:14.5px;color:#2e86c8;transform:scaleX(0.8442);">З</span>
<span class="t" style="left:1455.20px;top:82.33px;font-size:14.5px;line-height:14.5px;color:#2e86c8;transform:scaleX(0.8056);">РС</span>
<span class="t" style="left:1477.00px;top:57.00px;font-size:13px;line-height:13px;color:#1c1c1c;transform:scaleX(0.9167);">Запускатор.pyw</span>
<span class="t" style="left:1477.00px;top:76.80px;font-size:13px;line-height:13px;color:#1c1c1c;transform:scaleX(0.8666);">Редактор</span>
<span class="t" style="left:1477.00px;top:87.50px;font-size:13px;line-height:13px;color:#1c1c1c;transform:scaleX(0.9078);">свойств МК.py</span>
<span class="t" style="left:130.50px;top:131.11px;font-size:10.5px;line-height:10.5px;color:#3a3a3a;transform:scaleX(0.9037);">Системная</span>
<span class="t" style="left:205.20px;top:131.11px;font-size:10.5px;line-height:10.5px;color:#3a3a3a;transform:scaleX(0.9046);">Комп…</span>
<span class="t" style="left:258.25px;top:131.11px;font-size:10.5px;line-height:10.5px;color:#3a3a3a;transform:scaleX(0.8061);">Разме…</span>
<span class="t" style="left:308.90px;top:131.11px;font-size:10.5px;line-height:10.5px;color:#3a3a3a;transform:scaleX(0.8597);">Опера…</span>
<span class="t" style="left:364.10px;top:131.11px;font-size:10.5px;line-height:10.5px;color:#3a3a3a;transform:scaleX(0.9650);">Массив, копирование</span>
<span class="t" style="left:483.00px;top:131.11px;font-size:10.5px;line-height:10.5px;color:#3a3a3a;transform:scaleX(0.8723);">Вспом…</span>
<span class="t" style="left:548.30px;top:131.11px;font-size:10.5px;line-height:10.5px;color:#3a3a3a;transform:scaleX(0.8937);">Размеры</span>
<span class="t" style="left:628.00px;top:131.11px;font-size:10.5px;line-height:10.5px;color:#3a3a3a;transform:scaleX(0.9646);">Обозначения</span>
<span class="t" style="left:721.50px;top:131.11px;font-size:10.5px;line-height:10.5px;color:#3a3a3a;transform:scaleX(0.9626);">Диагностика</span>
<span class="t" style="left:800.75px;top:131.11px;font-size:10.5px;line-height:10.5px;color:#3a3a3a;transform:scaleX(0.8446);">Черте…</span>
<span class="t" style="left:852.90px;top:131.11px;font-size:10.5px;line-height:10.5px;color:#3a3a3a;transform:scaleX(0.9267);">Справочник мате…</span>
<span class="t" style="left:1006.80px;top:131.11px;font-size:10.5px;line-height:10.5px;color:#3a3a3a;transform:scaleX(0.9454);">Справочник стандартных изделий</span>
<span class="t" style="left:1358.90px;top:131.11px;font-size:10.5px;line-height:10.5px;color:#3a3a3a;transform:scaleX(0.9405);">Моя панель</span>
<svg class="b" style="left:944px;top:132px;" width="10" height="7" viewBox="0 0 10 7"><path d="M1 1h8L5 5.6z" fill="#222"/></svg>
<svg class="b" style="left:192px;top:131px;" width="5" height="9" viewBox="0 0 5 9"><rect x="0" y="0" width="1.6" height="1.6" fill="#6a6a6a"/><rect x="0" y="3" width="1.6" height="1.6" fill="#6a6a6a"/><rect x="0" y="6" width="1.6" height="1.6" fill="#6a6a6a"/><rect x="3" y="0" width="1.6" height="1.6" fill="#6a6a6a"/><rect x="3" y="3" width="1.6" height="1.6" fill="#6a6a6a"/><rect x="3" y="6" width="1.6" height="1.6" fill="#6a6a6a"/></svg>
<svg class="b" style="left:245px;top:131px;" width="5" height="9" viewBox="0 0 5 9"><rect x="0" y="0" width="1.6" height="1.6" fill="#6a6a6a"/><rect x="0" y="3" width="1.6" height="1.6" fill="#6a6a6a"/><rect x="0" y="6" width="1.6" height="1.6" fill="#6a6a6a"/><rect x="3" y="0" width="1.6" height="1.6" fill="#6a6a6a"/><rect x="3" y="3" width="1.6" height="1.6" fill="#6a6a6a"/><rect x="3" y="6" width="1.6" height="1.6" fill="#6a6a6a"/></svg>
<svg class="b" style="left:298px;top:131px;" width="5" height="9" viewBox="0 0 5 9"><rect x="0" y="0" width="1.6" height="1.6" fill="#6a6a6a"/><rect x="0" y="3" width="1.6" height="1.6" fill="#6a6a6a"/><rect x="0" y="6" width="1.6" height="1.6" fill="#6a6a6a"/><rect x="3" y="0" width="1.6" height="1.6" fill="#6a6a6a"/><rect x="3" y="3" width="1.6" height="1.6" fill="#6a6a6a"/><rect x="3" y="6" width="1.6" height="1.6" fill="#6a6a6a"/></svg>
<svg class="b" style="left:351px;top:131px;" width="5" height="9" viewBox="0 0 5 9"><rect x="0" y="0" width="1.6" height="1.6" fill="#6a6a6a"/><rect x="0" y="3" width="1.6" height="1.6" fill="#6a6a6a"/><rect x="0" y="6" width="1.6" height="1.6" fill="#6a6a6a"/><rect x="3" y="0" width="1.6" height="1.6" fill="#6a6a6a"/><rect x="3" y="3" width="1.6" height="1.6" fill="#6a6a6a"/><rect x="3" y="6" width="1.6" height="1.6" fill="#6a6a6a"/></svg>
<svg class="b" style="left:472px;top:131px;" width="5" height="9" viewBox="0 0 5 9"><rect x="0" y="0" width="1.6" height="1.6" fill="#6a6a6a"/><rect x="0" y="3" width="1.6" height="1.6" fill="#6a6a6a"/><rect x="0" y="6" width="1.6" height="1.6" fill="#6a6a6a"/><rect x="3" y="0" width="1.6" height="1.6" fill="#6a6a6a"/><rect x="3" y="3" width="1.6" height="1.6" fill="#6a6a6a"/><rect x="3" y="6" width="1.6" height="1.6" fill="#6a6a6a"/></svg>
<svg class="b" style="left:525px;top:131px;" width="5" height="9" viewBox="0 0 5 9"><rect x="0" y="0" width="1.6" height="1.6" fill="#6a6a6a"/><rect x="0" y="3" width="1.6" height="1.6" fill="#6a6a6a"/><rect x="0" y="6" width="1.6" height="1.6" fill="#6a6a6a"/><rect x="3" y="0" width="1.6" height="1.6" fill="#6a6a6a"/><rect x="3" y="3" width="1.6" height="1.6" fill="#6a6a6a"/><rect x="3" y="6" width="1.6" height="1.6" fill="#6a6a6a"/></svg>
<svg class="b" style="left:604px;top:131px;" width="5" height="9" viewBox="0 0 5 9"><rect x="0" y="0" width="1.6" height="1.6" fill="#6a6a6a"/><rect x="0" y="3" width="1.6" height="1.6" fill="#6a6a6a"/><rect x="0" y="6" width="1.6" height="1.6" fill="#6a6a6a"/><rect x="3" y="0" width="1.6" height="1.6" fill="#6a6a6a"/><rect x="3" y="3" width="1.6" height="1.6" fill="#6a6a6a"/><rect x="3" y="6" width="1.6" height="1.6" fill="#6a6a6a"/></svg>
<svg class="b" style="left:709px;top:131px;" width="5" height="9" viewBox="0 0 5 9"><rect x="0" y="0" width="1.6" height="1.6" fill="#6a6a6a"/><rect x="0" y="3" width="1.6" height="1.6" fill="#6a6a6a"/><rect x="0" y="6" width="1.6" height="1.6" fill="#6a6a6a"/><rect x="3" y="0" width="1.6" height="1.6" fill="#6a6a6a"/><rect x="3" y="3" width="1.6" height="1.6" fill="#6a6a6a"/><rect x="3" y="6" width="1.6" height="1.6" fill="#6a6a6a"/></svg>
<svg class="b" style="left:788px;top:131px;" width="5" height="9" viewBox="0 0 5 9"><rect x="0" y="0" width="1.6" height="1.6" fill="#6a6a6a"/><rect x="0" y="3" width="1.6" height="1.6" fill="#6a6a6a"/><rect x="0" y="6" width="1.6" height="1.6" fill="#6a6a6a"/><rect x="3" y="0" width="1.6" height="1.6" fill="#6a6a6a"/><rect x="3" y="3" width="1.6" height="1.6" fill="#6a6a6a"/><rect x="3" y="6" width="1.6" height="1.6" fill="#6a6a6a"/></svg>
<svg class="b" style="left:841px;top:131px;" width="5" height="9" viewBox="0 0 5 9"><rect x="0" y="0" width="1.6" height="1.6" fill="#6a6a6a"/><rect x="0" y="3" width="1.6" height="1.6" fill="#6a6a6a"/><rect x="0" y="6" width="1.6" height="1.6" fill="#6a6a6a"/><rect x="3" y="0" width="1.6" height="1.6" fill="#6a6a6a"/><rect x="3" y="3" width="1.6" height="1.6" fill="#6a6a6a"/><rect x="3" y="6" width="1.6" height="1.6" fill="#6a6a6a"/></svg>
<svg class="b" style="left:962px;top:131px;" width="5" height="9" viewBox="0 0 5 9"><rect x="0" y="0" width="1.6" height="1.6" fill="#6a6a6a"/><rect x="0" y="3" width="1.6" height="1.6" fill="#6a6a6a"/><rect x="0" y="6" width="1.6" height="1.6" fill="#6a6a6a"/><rect x="3" y="0" width="1.6" height="1.6" fill="#6a6a6a"/><rect x="3" y="3" width="1.6" height="1.6" fill="#6a6a6a"/><rect x="3" y="6" width="1.6" height="1.6" fill="#6a6a6a"/></svg>
<svg class="b" style="left:1203px;top:131px;" width="5" height="9" viewBox="0 0 5 9"><rect x="0" y="0" width="1.6" height="1.6" fill="#6a6a6a"/><rect x="0" y="3" width="1.6" height="1.6" fill="#6a6a6a"/><rect x="0" y="6" width="1.6" height="1.6" fill="#6a6a6a"/><rect x="3" y="0" width="1.6" height="1.6" fill="#6a6a6a"/><rect x="3" y="3" width="1.6" height="1.6" fill="#6a6a6a"/><rect x="3" y="6" width="1.6" height="1.6" fill="#6a6a6a"/></svg>
<svg class="b" style="left:1564px;top:131px;" width="5" height="9" viewBox="0 0 5 9"><rect x="0" y="0" width="1.6" height="1.6" fill="#6a6a6a"/><rect x="0" y="3" width="1.6" height="1.6" fill="#6a6a6a"/><rect x="0" y="6" width="1.6" height="1.6" fill="#6a6a6a"/><rect x="3" y="0" width="1.6" height="1.6" fill="#6a6a6a"/><rect x="3" y="3" width="1.6" height="1.6" fill="#6a6a6a"/><rect x="3" y="6" width="1.6" height="1.6" fill="#6a6a6a"/></svg>
<!-- tree -->
<div class="b" style="left:0px;top:145px;width:26px;height:100px;background:#f0f0f0;"></div>
<div class="b" style="left:0px;top:245px;width:26px;height:787px;background:#c9c9c9;"></div>
<div class="b" style="left:0px;top:145px;width:26px;height:24px;background:#4b4b4b;"></div>
<svg class="b" style="left:5px;top:148px;" width="16" height="18" viewBox="0 0 16 18"><path d="M3 2.6v12M3 5.4h7M3 10h7M3 14.6h7" fill="none" stroke="#fff" stroke-width="1.3"/><rect x="1.8" y="1" width="2.6" height="2.6" fill="#fff"/><rect x="10" y="4" width="2.8" height="2.8" fill="none" stroke="#fff" stroke-width="1"/><rect x="10" y="8.6" width="2.8" height="2.8" fill="none" stroke="#fff" stroke-width="1"/><rect x="10" y="13.2" width="2.8" height="2.8" fill="none" stroke="#fff" stroke-width="1"/></svg>
<svg class="b" style="left:6px;top:174px;" width="14" height="17" viewBox="0 0 14 17"><rect x="1" y="1" width="11.6" height="14.6" fill="none" stroke="#1c1c1c" stroke-width="1.2"/><rect x="3" y="3.4" width="2.6" height="2.6" fill="none" stroke="#1c1c1c" stroke-width="0.9"/><path d="M7 4.8h4M7 8.6h4M7 12.4h4M2.8 8.6l1.2 1.2 1.8-2.2M2.8 12.4l1.2 1.2 1.8-2.2" fill="none" stroke="#1c1c1c" stroke-width="1"/></svg>
<svg class="b" style="left:5px;top:198px;" width="16" height="18" viewBox="0 0 16 18"><path d="M1 16.4c2 0.6 2.8-0.6 3.2-2.8L6 3.8C6.4 1.6 7.6 0.6 9.4 1.2M2.6 6.6h6" fill="none" stroke="#1c1c1c" stroke-width="1.2"/><path d="M8.6 9.6l5 6.4M13.6 9.6l-5 6.4" stroke="#1c1c1c" stroke-width="1.2"/></svg>
<svg class="b" style="left:4px;top:223px;" width="18" height="18" viewBox="0 0 18 18"><rect x="0.8" y="1" width="16" height="4" rx="1.6" fill="#1c1c1c"/><rect x="0.8" y="7.2" width="16" height="4" rx="1.6" fill="#1c1c1c"/><rect x="0.8" y="13.4" width="16" height="4" rx="1.6" fill="#1c1c1c"/></svg>
<div class="b" style="left:27px;top:145px;width:332px;height:887px;background:#f0f0f0;"></div>
<div class="b" style="left:26px;top:145px;width:1px;height:887px;background:#5a5a5a;"></div>
<div class="b" style="left:359px;top:145px;width:1px;height:887px;background:#5a5a5a;"></div>
<div class="b" style="left:27px;top:145px;width:332px;height:16px;background:#c6c6c6;"></div>
<span class="t" style="left:29.50px;top:147.82px;font-size:11.2px;line-height:11.2px;color:#262626;letter-spacing:0.097px;">Дерево: структура</span>
<svg class="b" style="left:343px;top:146px;" width="15" height="15" viewBox="0 0 15 15"><circle cx="7.5" cy="7.5" r="3.6" fill="none" stroke="#1c1c1c" stroke-width="1.6"/><path d="M7.5 1v2.2" stroke="#1c1c1c" stroke-width="2" transform="rotate(0 7.5 7.5)"/><path d="M7.5 1v2.2" stroke="#1c1c1c" stroke-width="2" transform="rotate(45 7.5 7.5)"/><path d="M7.5 1v2.2" stroke="#1c1c1c" stroke-width="2" transform="rotate(90 7.5 7.5)"/><path d="M7.5 1v2.2" stroke="#1c1c1c" stroke-width="2" transform="rotate(135 7.5 7.5)"/><path d="M7.5 1v2.2" stroke="#1c1c1c" stroke-width="2" transform="rotate(180 7.5 7.5)"/><path d="M7.5 1v2.2" stroke="#1c1c1c" stroke-width="2" transform="rotate(225 7.5 7.5)"/><path d="M7.5 1v2.2" stroke="#1c1c1c" stroke-width="2" transform="rotate(270 7.5 7.5)"/><path d="M7.5 1v2.2" stroke="#1c1c1c" stroke-width="2" transform="rotate(315 7.5 7.5)"/></svg>
<div class="b" style="left:27px;top:161px;width:332px;height:26px;background:#f0f0f0;"></div>
<div class="b" style="left:27px;top:161px;width:26px;height:26px;background:#f5f5f5;"></div>
<div class="b" style="left:53px;top:161px;width:26px;height:26px;background:#4b4b4b;"></div>
<div class="b" style="left:160px;top:161px;width:47px;height:26px;background:#4b4b4b;"></div>
<div class="b" style="left:157px;top:163px;width:1px;height:23px;background:#8a8a8a;"></div>
<div class="b" style="left:159px;top:163px;width:1px;height:23px;background:#8a8a8a;"></div>
<svg class="b" style="left:31px;top:165px;" width="18" height="18" viewBox="0 0 18 18"><path d="M3 2.6v12.6h4M3 7.6h2" fill="none" stroke="#1c1c1c" stroke-width="1.2" stroke-dasharray="none"/><rect x="1.8" y="1" width="2.6" height="2.6" fill="#fff" stroke="#1c1c1c" stroke-width="1"/><path d="M7.4 3.4v11" stroke="#1c1c1c" stroke-width="1" stroke-dasharray="1.4 1.2"/><path d="M10.6 6.4l1-0.8v4M13.6 6.4l1-0.8v4M9.8 12l0.8-0.6v3.6M12.4 12c1-1 2.6 0 1.6 1.2l-1.8 2h2.6" fill="none" stroke="#1c1c1c" stroke-width="0.95"/></svg>
<svg class="b" style="left:57px;top:165px;" width="18" height="18" viewBox="0 0 18 18"><path d="M3.6 2.6v12.6h5.6M3.6 8h5.6M9 4.4h4.4" fill="none" stroke="#fff" stroke-width="1.2"/><rect x="2.2" y="1" width="2.6" height="2.6" fill="#4b4b4b" stroke="#fff" stroke-width="1"/><rect x="9" y="6.8" width="2.4" height="2.4" fill="#4b4b4b" stroke="#fff" stroke-width="1"/><rect x="9" y="14" width="2.4" height="2.4" fill="#4b4b4b" stroke="#fff" stroke-width="1"/><rect x="12.6" y="10.4" width="2.4" height="2.4" fill="#4b4b4b" stroke="#fff" stroke-width="1"/><path d="M6.6 11.6h6" stroke="#fff" stroke-width="1.1"/></svg>
<svg class="b" style="left:83px;top:165px;" width="18" height="18" viewBox="0 0 18 18"><path d="M5.6 11V3.4L8 1h5.2l3 3.2v8.2h-4" fill="none" stroke="#1c1c1c" stroke-width="1.2"/><path d="M3.6 13V8.6l2.6-2.6h3.6l2.4 2.6v6" fill="#f0f0f0" stroke="#1c1c1c" stroke-width="1.1"/><circle cx="10.6" cy="7.6" r="2.4" fill="none" stroke="#1c1c1c" stroke-width="1.1"/><rect x="1" y="11" width="6" height="6" fill="#f0f0f0" stroke="#1c1c1c" stroke-width="1.2"/><circle cx="4" cy="14" r="1.4" fill="none" stroke="#1c1c1c" stroke-width="1"/></svg>
<svg class="b" style="left:110px;top:165px;" width="18" height="18" viewBox="0 0 18 18"><rect x="1" y="1.6" width="15" height="14.6" fill="none" stroke="#1c1c1c" stroke-width="1.3" stroke-dasharray="2 1.6"/><rect x="4.6" y="5" width="7.6" height="8" fill="none" stroke="#1c1c1c" stroke-width="0.9" stroke-dasharray="1.2 1.2"/></svg>
<svg class="b" style="left:135px;top:165px;" width="18" height="18" viewBox="0 0 18 18"><path d="M1 6l8-3.6 8 0-8 3.6zM1 10l8-3.6 8 0-8 3.6zM1 14l8-3.6 8 0-8 3.6z" fill="#1c1c1c" transform="translate(0 0.8)"/><path d="M4.6 3L14.6 2.4 13 5.4 2 6z" fill="#1c1c1c"/></svg>
<svg class="b" style="left:164px;top:165px;" width="18" height="18" viewBox="0 0 18 18"><path d="M2 2.4v13.4" stroke="#fff" stroke-width="1.3"/><path d="M2 2.4h2M2 15.8h2" stroke="#fff" stroke-width="1.2"/><path d="M4.6 4.4l1.6 1.6 3-3.6M4.6 9l1.6 1.6 3-3.6M4.6 13.6l1.6 1.6 3-3.6" fill="none" stroke="#fff" stroke-width="1.2"/><path d="M11 5.6h4.6M11 10.2h4.6M11 14.8h4.6" stroke="#fff" stroke-width="1.3" stroke-dasharray="2.6 1.4"/></svg>
<svg class="b" style="left:191px;top:170px;" width="12" height="8" viewBox="0 0 12 8"><path d="M1 1.4h9.6L5.8 6.6z" fill="#fff"/></svg>
<div class="b" style="left:27px;top:186px;width:332px;height:1px;background:#8c8c8c;"></div>
<div class="b" style="left:27px;top:187px;width:332px;height:1px;background:#1a1a1a;"></div>
<div class="b" style="left:27px;top:188px;width:332px;height:24px;background:#fff;"></div>
<div class="b" style="left:27px;top:188px;width:26px;height:24px;background:#f4f4f4;"></div>
<svg class="b" style="left:31px;top:191px;" width="18" height="18" viewBox="0 0 18 18"><path d="M1 1.6h16L10.4 9v7.6l-3-1.6V9z" fill="#1c1c1c"/></svg>
<svg class="b" style="left:57px;top:192px;" width="16" height="16" viewBox="0 0 16 16"><circle cx="9.6" cy="6.2" r="3.6" fill="none" stroke="#b4b4b4" stroke-width="1.3"/><path d="M7 9L2.6 13.6" stroke="#b4b4b4" stroke-width="1.6"/></svg>
<span class="t" style="left:77.00px;top:193.27px;font-size:13.5px;line-height:13.5px;color:#b5b5b5;transform:scaleX(0.9362);">Поиск (Ctrl+/)</span>
<div class="b" style="left:27px;top:212px;width:332px;height:1px;background:#1a1a1a;"></div>
<div class="b" style="left:27px;top:213px;width:332px;height:1px;background:#8c8c8c;"></div>
<div class="b" style="left:27px;top:214px;width:52px;height:131px;background:#e4e4e4;"></div>
<div class="b" style="left:27px;top:241px;width:52px;height:1px;background:#c4c4c4;"></div>
<div class="b" style="left:79px;top:241px;width:280px;height:1px;background:#e0e0e0;"></div>
<div class="b" style="left:27px;top:267px;width:52px;height:1px;background:#c4c4c4;"></div>
<div class="b" style="left:79px;top:267px;width:280px;height:1px;background:#e0e0e0;"></div>
<div class="b" style="left:27px;top:293px;width:52px;height:1px;background:#c4c4c4;"></div>
<div class="b" style="left:79px;top:293px;width:280px;height:1px;background:#e0e0e0;"></div>
<div class="b" style="left:27px;top:319px;width:52px;height:1px;background:#c4c4c4;"></div>
<div class="b" style="left:79px;top:319px;width:280px;height:1px;background:#e0e0e0;"></div>
<div class="b" style="left:27px;top:345px;width:52px;height:1px;background:#c4c4c4;"></div>
<div class="b" style="left:79px;top:345px;width:280px;height:1px;background:#e0e0e0;"></div>
<svg class="b" style="left:92px;top:225px;" width="8" height="6" viewBox="0 0 8 6"><path d="M0.6 0.6h6.6L3.9 5.4z" fill="#1c1c1c"/></svg>
<svg class="b" style="left:102px;top:220px;" width="18" height="17" viewBox="0 0 18 17"><path d="M1.4 15.6V4.6L4 1.2h6.6l4.2 4.2v6.2l-3.2 4z" fill="none" stroke="#1c1c1c" stroke-width="1.2"/><path d="M3 14V5.6h7.2l3 2.6v5.8z" fill="#1c1c1c"/><circle cx="8" cy="10.6" r="2.6" fill="#f0f0f0"/><circle cx="8.4" cy="11" r="1.3" fill="#1c1c1c"/><path d="M12 15.6l4.4-3.4" stroke="#1c1c1c" stroke-width="1.2"/></svg>
<span class="t" style="left:121.30px;top:223.42px;font-size:12.5px;line-height:12.5px;color:#1c1c1c;font-weight:700;transform:scaleX(0.8576);">(+)</span>
<span class="t" style="left:136.30px;top:223.42px;font-size:12.5px;line-height:12.5px;color:#1c1c1c;transform:scaleX(0.9092);">ТБГ 150.00.00.000 Сушильная установка</span>
<span class="t" style="left:355.10px;top:223.42px;font-size:12.5px;line-height:12.5px;color:#1c1c1c;transform:scaleX(1.2944);clip-path:inset(0 2px 0 0);">(</span>
<svg class="b" style="left:32px;top:246px;" width="16" height="16" viewBox="0 0 16 16"><path d="M1 8c2.8-4 11.2-4 14 0-2.800 4-11.200 4-14 0z" fill="#e4e4e4" stroke="#1c1c1c" stroke-width="1.9"/><circle cx="8" cy="8" r="2.7" fill="#1c1c1c"/><circle cx="7.2" cy="7.2" r="0.9" fill="#e4e4e4"/><path d="M0.4 0.6L15.8 15.2" stroke="#1c1c1c" stroke-width="1.4"/></svg>
<svg class="b" style="left:112px;top:246px;" width="18" height="18" viewBox="0 0 18 18"><path d="M1 9h1.4M1 12.2h1.4M1 15.4h1.4" stroke="#8e8e8e" stroke-width="1"/><path d="M3.6 9h13M3.6 12.2h11M3.6 15.4h9" stroke="#8e8e8e" stroke-width="1.1"/><path d="M9.6 7.4l1-2.6L14 1.6l1.8 1.8-3.4 3.2z" fill="#8e8e8e"/></svg>
<span class="t" style="left:130.80px;top:249.22px;font-size:12.5px;line-height:12.5px;color:#8e8e8e;transform:scaleX(0.9455);">Технические требования</span>
<svg class="b" style="left:32px;top:272px;" width="16" height="16" viewBox="0 0 16 16"><path d="M1 8c2.8-4 11.2-4 14 0-2.800 4-11.200 4-14 0z" fill="#e4e4e4" stroke="#1c1c1c" stroke-width="1.9"/><circle cx="8" cy="8" r="2.7" fill="#1c1c1c"/><circle cx="7.2" cy="7.2" r="0.9" fill="#e4e4e4"/><path d="M0.4 0.6L15.8 15.2" stroke="#1c1c1c" stroke-width="1.4"/></svg>
<svg class="b" style="left:103px;top:277px;" width="6" height="8" viewBox="0 0 6 8"><path d="M0.6 0.8L5 3.8 0.6 6.8z" fill="#1c1c1c"/></svg>
<svg class="b" style="left:112px;top:271px;" width="18" height="18" viewBox="0 0 18 18"><rect x="5" y="3.6" width="7.6" height="7.6" fill="none" stroke="#8e8e8e" stroke-width="1.1"/><path d="M7.2 0.6v8.6h9.6M7.2 9.2L1 15.8" fill="none" stroke="#8e8e8e" stroke-width="1.1"/></svg>
<span class="t" style="left:130.80px;top:275.42px;font-size:12.5px;line-height:12.5px;color:#8e8e8e;transform:scaleX(0.9575);">Системы координат</span>
<svg class="b" style="left:32px;top:298px;" width="16" height="16" viewBox="0 0 16 16"><path d="M1 8c2.8-4 11.2-4 14 0-2.800 4-11.200 4-14 0z" fill="#e4e4e4" stroke="#1c1c1c" stroke-width="1.9"/><circle cx="8" cy="8" r="2.7" fill="#1c1c1c"/><circle cx="7.2" cy="7.2" r="0.9" fill="#e4e4e4"/><path d="M0.4 0.6L15.8 15.2" stroke="#1c1c1c" stroke-width="1.4"/></svg>
<svg class="b" style="left:60px;top:299.5px;" width="13" height="13" viewBox="0 0 13 13"><path d="M12 0.8H6.4a5.6 5.6 0 0 0 0 11.4H12M1 6.5h11" fill="none" stroke="#1c1c1c" stroke-width="1.2"/></svg>
<svg class="b" style="left:103px;top:303px;" width="6" height="8" viewBox="0 0 6 8"><path d="M0.6 0.8L5 3.8 0.6 6.8z" fill="#1c1c1c"/></svg>
<svg class="b" style="left:112px;top:297px;" width="18" height="18" viewBox="0 0 18 18"><rect x="2.6" y="1" width="5.6" height="6" fill="none" stroke="#8e8e8e" stroke-width="1.1"/><path d="M5.4 7v4.4" stroke="#8e8e8e" stroke-width="1.1"/><path d="M3 11.6h12l-2.4 3.6H0.8z" fill="#bcbcbc" stroke="#8e8e8e" stroke-width="1"/><path d="M9.6 9.6l2 2.4 4.6-6.4" fill="none" stroke="#8e8e8e" stroke-width="1.1"/></svg>
<span class="t" style="left:130.80px;top:301.22px;font-size:12.5px;line-height:12.5px;color:#8e8e8e;transform:scaleX(0.9446);">Элементы оформления</span>
<svg class="b" style="left:32px;top:324px;" width="16" height="16" viewBox="0 0 16 16"><path d="M1 8c2.8-4 11.2-4 14 0-2.800 4-11.200 4-14 0z" fill="#e4e4e4" stroke="#1c1c1c" stroke-width="1.9"/><circle cx="8" cy="8" r="2.7" fill="#1c1c1c"/><circle cx="7.2" cy="7.2" r="0.9" fill="#e4e4e4"/></svg>
<svg class="b" style="left:60px;top:325.5px;" width="13" height="13" viewBox="0 0 13 13"><path d="M12 0.8H6.4a5.6 5.6 0 0 0 0 11.4H12M1 6.5h11" fill="none" stroke="#1c1c1c" stroke-width="1.2"/></svg>
<svg class="b" style="left:103px;top:329px;" width="6" height="8" viewBox="0 0 6 8"><path d="M0.6 0.8L5 3.8 0.6 6.8z" fill="#1c1c1c"/></svg>
<svg class="b" style="left:113px;top:323px;" width="16" height="18" viewBox="0 0 16 18"><path d="M3 4v11.4h6.6M3 9h4" fill="none" stroke="#1c1c1c" stroke-width="1.3"/><path d="M0.6 5.2V1l3.6 0 1.8 2v2.2z" fill="#1c1c1c"/><path d="M6.6 10.6V6.6h3.2l2 2v2z" fill="#1c1c1c"/><rect x="9.6" y="13" width="3.4" height="3.4" fill="#f0f0f0" stroke="#1c1c1c" stroke-width="1.2"/></svg>
<svg class="b" style="left:132px;top:324px;" width="13" height="14" viewBox="0 0 13 14"><path d="M0.6 13L5 8" stroke="#1c1c1c" stroke-width="1.3"/><path d="M6.8 0.8l5.4 5.4-1.6 0.4-2 2 0.2 2.4-1.2 1.2L1.8 6.4 3 5.2l2.4 0.2 2-2z" fill="#1c1c1c"/></svg>
<span class="t" style="left:145.90px;top:327.42px;font-size:12.5px;line-height:12.5px;color:#1c1c1c;letter-spacing:-0.192px;">Компоненты</span>
<div class="b" style="left:27px;top:807px;width:332px;height:1px;background:#e0e0e0;"></div>
<div class="b" style="left:27px;top:814px;width:332px;height:1px;background:#3c3c3c;"></div>
<div class="b" style="left:27px;top:815px;width:26px;height:24px;background:#4b4b4b;"></div>
<svg class="b" style="left:31px;top:818px;" width="16" height="18" viewBox="0 0 16 18"><path d="M3 2.6v12M3 5.4h7M3 10h7M3 14.6h7" fill="none" stroke="#fff" stroke-width="1.3"/><rect x="1.8" y="1" width="2.6" height="2.6" fill="#fff"/><rect x="10" y="4" width="2.8" height="2.8" fill="none" stroke="#fff" stroke-width="1"/><rect x="10" y="8.6" width="2.8" height="2.8" fill="none" stroke="#fff" stroke-width="1"/><rect x="10" y="13.2" width="2.8" height="2.8" fill="none" stroke="#fff" stroke-width="1"/></svg>
<svg class="b" style="left:59px;top:818px;" width="14" height="17" viewBox="0 0 14 17"><rect x="1" y="1" width="11.6" height="14.6" fill="none" stroke="#1c1c1c" stroke-width="1.2"/><rect x="3" y="3.4" width="2.6" height="2.6" fill="none" stroke="#1c1c1c" stroke-width="0.9"/><path d="M7 4.8h4M7 8.6h4M7 12.4h4M2.8 8.6l1.2 1.2 1.8-2.2M2.8 12.4l1.2 1.2 1.8-2.2" fill="none" stroke="#1c1c1c" stroke-width="1"/></svg>
<svg class="b" style="left:85px;top:818px;" width="16" height="18" viewBox="0 0 16 18"><path d="M1 16.4c2 0.6 2.8-0.6 3.2-2.8L6 3.8C6.4 1.6 7.6 0.6 9.4 1.2M2.6 6.6h6" fill="none" stroke="#1c1c1c" stroke-width="1.2"/><path d="M8.6 9.6l5 6.4M13.6 9.6l-5 6.4" stroke="#1c1c1c" stroke-width="1.2"/></svg>
<div class="b" style="left:27px;top:839px;width:332px;height:1px;background:#3c3c3c;"></div>
<div class="b" style="left:27px;top:840px;width:332px;height:1px;background:#aaa;"></div>
<!-- vtool -->
<div class="b" style="left:685px;top:145px;width:636px;height:26px;background:#f0f0f0;box-sizing:border-box;border:1px solid #5a5a5a;border-top:none;"></div>
<div class="b" style="left:701px;top:145px;width:1px;height:25px;background:#5a5a5a;"></div>
<div class="b" style="left:757px;top:145px;width:1px;height:25px;background:#5a5a5a;"></div>
<div class="b" style="left:985px;top:145px;width:1px;height:25px;background:#5a5a5a;"></div>
<div class="b" style="left:908px;top:145px;width:1px;height:25px;background:#5a5a5a;"></div>
<div class="b" style="left:910px;top:145px;width:1px;height:25px;background:#5a5a5a;"></div>
<div class="b" style="left:1083px;top:145px;width:1px;height:25px;background:#5a5a5a;"></div>
<div class="b" style="left:1085px;top:145px;width:1px;height:25px;background:#5a5a5a;"></div>
<div class="b" style="left:1214px;top:145px;width:1px;height:25px;background:#5a5a5a;"></div>
<div class="b" style="left:1216px;top:145px;width:1px;height:25px;background:#5a5a5a;"></div>
<div class="b" style="left:1263px;top:145px;width:1px;height:25px;background:#5a5a5a;"></div>
<div class="b" style="left:1265px;top:145px;width:1px;height:25px;background:#5a5a5a;"></div>
<div class="b" style="left:911px;top:145px;width:25px;height:25px;background:#4b4b4b;"></div>
<div class="b" style="left:1086px;top:145px;width:25px;height:25px;background:#4b4b4b;"></div>
<div class="b" style="left:1139px;top:145px;width:26px;height:25px;background:#4b4b4b;"></div>
<div class="b" style="left:1217px;top:145px;width:46px;height:25px;background:#4b4b4b;"></div>
<svg class="b" style="left:688px;top:149px;" width="12" height="5" viewBox="0 0 12 5"><rect x="0" y="0" width="1.8" height="1.6" fill="#444"/><rect x="0" y="3" width="1.8" height="1.6" fill="#444"/><rect x="3" y="0" width="1.8" height="1.6" fill="#444"/><rect x="3" y="3" width="1.8" height="1.6" fill="#444"/><rect x="6" y="0" width="1.8" height="1.6" fill="#444"/><rect x="6" y="3" width="1.8" height="1.6" fill="#444"/><rect x="9" y="0" width="1.8" height="1.6" fill="#444"/><rect x="9" y="3" width="1.8" height="1.6" fill="#444"/></svg>
<svg class="b" style="left:707px;top:148px;" width="18" height="18" viewBox="0 0 18 18"><path d="M2.4 2.4h6.2v6.6h6.4v6.6H2.4z" fill="none" stroke="#1c1c1c" stroke-width="1.3"/><circle cx="2.4" cy="2.4" r="1.3" fill="#f0f0f0" stroke="#1c1c1c" stroke-width="0.9"/><circle cx="8.6" cy="2.4" r="1.3" fill="#f0f0f0" stroke="#1c1c1c" stroke-width="0.9"/><circle cx="8.6" cy="9" r="1.3" fill="#f0f0f0" stroke="#1c1c1c" stroke-width="0.9"/><circle cx="15" cy="9" r="1.3" fill="#f0f0f0" stroke="#1c1c1c" stroke-width="0.9"/><circle cx="15" cy="15.6" r="1.3" fill="#f0f0f0" stroke="#1c1c1c" stroke-width="0.9"/><circle cx="2.4" cy="15.6" r="1.3" fill="#f0f0f0" stroke="#1c1c1c" stroke-width="0.9"/></svg>
<svg class="b" style="left:734px;top:148px;" width="18" height="18" viewBox="0 0 18 18"><path d="M1.6 16V4.6h4.6v8.6h8.4V16z" fill="#f0f0f0" stroke="#1c1c1c" stroke-width="1.4"/><path d="M6.2 7.6c0.2 3.4 2.2 5.4 5.8 5.6H6.2z" fill="#1c1c1c"/><circle cx="13" cy="4.6" r="3.2" fill="none" stroke="#1c1c1c" stroke-width="1.4"/><rect x="11.8" y="3.4" width="2.4" height="2.4" fill="#1c1c1c"/><path d="M2 16l2.4-2.4" stroke="#1c1c1c" stroke-width="1"/></svg>
<svg class="b" style="left:763px;top:148px;" width="18" height="18" viewBox="0 0 18 18"><circle cx="6.6" cy="7" r="5.2" fill="none" stroke="#1c1c1c" stroke-width="1.3"/><path d="M10.4 11l4.6 4.8" stroke="#1c1c1c" stroke-width="1.9"/><rect x="6.6" y="3" width="9" height="6.4" fill="none" stroke="#1c1c1c" stroke-width="1" stroke-dasharray="1.2 1.1"/></svg>
<svg class="b" style="left:791px;top:153px;" width="11" height="7" viewBox="0 0 11 7"><path d="M0.4 0.8h10L5.4 6z" fill="#1c1c1c"/></svg>
<svg class="b" style="left:811px;top:148px;" width="18" height="18" viewBox="0 0 18 18"><path d="M4 10.4h13.4l-3.6 6H0.4z" fill="#1c1c1c"/><path d="M8.6 0.8l4.4 5h-2.6v5.6H6.8V5.8H4.2z" fill="#f0f0f0" stroke="#1c1c1c" stroke-width="1.3"/></svg>
<svg class="b" style="left:838px;top:148px;" width="18" height="18" viewBox="0 0 18 18"><rect x="1.4" y="9.4" width="6.6" height="6.6" fill="none" stroke="#1c1c1c" stroke-width="1.4"/><path d="M3 9.4l2.6-3 0 3M8 9.4l2.4-2.4" stroke="#1c1c1c" stroke-width="1"/><path d="M5.6 7V2.4M5.6 1l-1.6 2.6h3.2zM8.6 12h5.8M15.8 12l-2.6-1.6v3.2z" stroke="#1c1c1c" stroke-width="1.1" fill="#1c1c1c"/><path d="M8.6 2.4c2.6 0.4 4.6 2.4 5.2 5" fill="none" stroke="#1c1c1c" stroke-width="0.9" stroke-dasharray="1.4 1"/><path d="M8 1.6l2.2 0.2-1 1.6zM14.4 8.4l-1.6-1.2 1.8-0.4z" fill="#1c1c1c"/></svg>
<svg class="b" style="left:865px;top:148px;" width="18" height="18" viewBox="0 0 18 18"><path d="M7 10V2M8.6 10.4h6.6M5.6 11.6L1.6 15.6" stroke="#1c1c1c" stroke-width="1.1" fill="none"/><path d="M7 0.6l-1.5 2.8h3zM16.8 10.4l-2.8-1.5v3zM0.8 16.6l0.8-3 2.2 2.2z" fill="#1c1c1c"/><rect x="5.6" y="9" width="2.8" height="2.8" fill="#f0f0f0" stroke="#1c1c1c" stroke-width="1"/></svg>
<svg class="b" style="left:892px;top:153px;" width="11" height="7" viewBox="0 0 11 7"><path d="M0.4 0.8h10L5.4 6z" fill="#1c1c1c"/></svg>
<svg class="b" style="left:914px;top:148px;" width="18" height="18" viewBox="0 0 18 18"><path d="M9 0.8L16.6 4v9.2L9 17 1.4 13.2V4z" fill="#fff"/><path d="M1.4 4L9 7.6 16.6 4M9 7.6V17" fill="none" stroke="#4b4b4b" stroke-width="1"/></svg>
<svg class="b" style="left:941px;top:148px;" width="18" height="18" viewBox="0 0 18 18"><path d="M9 0.8L16.6 4v9.2L9 17 1.4 13.2V4z" fill="none" stroke="#1c1c1c" stroke-width="1.2"/><path d="M1.4 4L9 7.6 16.6 4M9 7.6V17M9 0.8v9.4M1.4 13.2L9 10.2l7.6 3" fill="none" stroke="#1c1c1c" stroke-width="0.9"/></svg>
<svg class="b" style="left:969px;top:153px;" width="11" height="7" viewBox="0 0 11 7"><path d="M0.4 0.8h10L5.4 6z" fill="#1c1c1c"/></svg>
<svg class="b" style="left:991px;top:148px;" width="18" height="18" viewBox="0 0 18 18"><path d="M2 9c2.8-4.6 11.2-4.6 14 0-2.8 4.6-11.2 4.6-14 0z" fill="none" stroke="#1c1c1c" stroke-width="1.5"/><circle cx="9" cy="9" r="2.6" fill="#1c1c1c"/><circle cx="8.4" cy="8.4" r="0.8" fill="#f0f0f0"/><path d="M1.4 1.2L17 16.6" stroke="#1c1c1c" stroke-width="1.2"/></svg>
<svg class="b" style="left:1019px;top:153px;" width="11" height="7" viewBox="0 0 11 7"><path d="M0.4 0.8h10L5.4 6z" fill="#1c1c1c"/></svg>
<svg class="b" style="left:1039px;top:148px;" width="18" height="18" viewBox="0 0 18 18"><path d="M1 1.4l2 2" stroke="#1c1c1c" stroke-width="1.2"/><rect x="1.4" y="3.4" width="15.4" height="11.2" fill="#1c1c1c"/><path d="M3 9c2.4-3.6 9.6-3.6 12 0-2.4 3.6-9.6 3.6-12 0z" fill="#1c1c1c" stroke="#f0f0f0" stroke-width="1.2"/><circle cx="9" cy="9" r="2.2" fill="#f0f0f0"/><circle cx="9" cy="9" r="1" fill="#1c1c1c"/><path d="M15 14.6l2 2" stroke="#1c1c1c" stroke-width="1.2"/></svg>
<svg class="b" style="left:1067px;top:153px;" width="11" height="7" viewBox="0 0 11 7"><path d="M0.4 0.8h10L5.4 6z" fill="#1c1c1c"/></svg>
<svg class="b" style="left:1089px;top:148px;" width="18" height="18" viewBox="0 0 18 18"><path d="M3.4 13.4L14.6 4" stroke="#fff" stroke-width="1.3"/><circle cx="3.2" cy="13.6" r="1.9" fill="#4b4b4b" stroke="#fff" stroke-width="1.2"/><circle cx="14.8" cy="3.8" r="1.9" fill="#4b4b4b" stroke="#fff" stroke-width="1.2"/><path d="M4 2.4l2 2-2 2-2-2zM14 12l2 2-2 2-2-2z" fill="#4b4b4b" stroke="#fff" stroke-width="1.1"/></svg>
<svg class="b" style="left:1116px;top:148px;" width="18" height="18" viewBox="0 0 18 18"><path d="M5.6 6.4l2-2.6h8.6v10l-2 2.4H5.6z" fill="#f0f0f0" stroke="#1c1c1c" stroke-width="1.3"/><path d="M5.6 6.4h8.6v9.8M14.2 6.4l2-2.6" fill="none" stroke="#1c1c1c" stroke-width="1.3"/><path d="M7.6 3.8V1.6M10 3.8V1.6M12.4 3.8V1.6M14.8 3.8V1.6M7.6 1.6h8.6" stroke="#1c1c1c" stroke-width="1.2"/><path d="M1.6 6.4h4M1.6 16.2h4M3 7v8.6" stroke="#1c1c1c" stroke-width="1.1"/><path d="M3 7.4l-1.4 2h2.8zM3 15.2l-1.4-2h2.8z" fill="#1c1c1c"/></svg>
<svg class="b" style="left:1143px;top:148px;" width="18" height="18" viewBox="0 0 18 18"><path d="M1.4 2.4L8 1l0 9-3 6-3.6-1.4z" fill="none" stroke="#fff" stroke-width="1.1"/><path d="M1.4 2.4L8 10" stroke="#fff" stroke-width="1"/><path d="M8 4l5-2.6 0 5 3.6-1v7.2L9.6 16 8 10z" fill="#fff"/><path d="M8 4v6l1.6 6M13 6.4l-2 4.6" stroke="#4b4b4b" stroke-width="0.9" fill="none"/><path d="M2 3.4l5 5.6-2.4 5.6L2 13.6z" fill="#bbb"/></svg>
<svg class="b" style="left:1170px;top:148px;" width="18" height="18" viewBox="0 0 18 18"><path d="M4.4 1.2L1.4 4v11l3 1.4h8l4.6-2.2v-3.6L8.6 2.4z" fill="#1c1c1c"/><path d="M4.6 5.4v7.2h7.2v-3L8 5.4z" fill="#f0f0f0"/><path d="M4.4 1.2l3 1.6 8.8 8.2" fill="none" stroke="#f0f0f0" stroke-width="0.9" stroke-dasharray="1.2 1"/><path d="M7.4 2.8l-1.6 2 6.8 6.4 2.6-1.4" fill="none" stroke="#1c1c1c" stroke-width="1"/><path d="M12.6 11.2l2 1.4 1.8-1.2-1.6-1.6z" fill="#f0f0f0" stroke="#1c1c1c" stroke-width="0.9"/></svg>
<svg class="b" style="left:1198px;top:153px;" width="11" height="7" viewBox="0 0 11 7"><path d="M0.4 0.8h10L5.4 6z" fill="#1c1c1c"/></svg>
<svg class="b" style="left:1220px;top:148px;" width="18" height="18" viewBox="0 0 18 18"><path d="M0.6 1.4h16c-2.6 2-5.6 5-6.4 8.6V16.6H7V10C6.2 6.4 3.2 3.4 0.6 1.4z" fill="#fff"/></svg>
<svg class="b" style="left:1247.5px;top:153px;" width="11" height="7" viewBox="0 0 11 7"><path d="M0.4 0.8h10L5.4 6z" fill="#fff"/></svg>
<svg class="b" style="left:1270px;top:148px;" width="18" height="18" viewBox="0 0 18 18"><path d="M0.6 1.6h16.2" stroke="#1c1c1c" stroke-width="1.8"/><path d="M2 2v8.4M2 11.4l-1.2-2.2h2.4z" stroke="#1c1c1c" stroke-width="1" fill="#1c1c1c"/><rect x="0.8" y="12" width="6" height="4.6" fill="#f0f0f0" stroke="#1c1c1c" stroke-width="1.2"/><path d="M0.8 14.3h6M3.8 12v4.6" stroke="#1c1c1c" stroke-width="1"/><rect x="10" y="2.4" width="4.2" height="14.2" fill="#f0f0f0" stroke="#1c1c1c" stroke-width="1.3"/><path d="M10 2.4l4.2 3.6-4.2 3.4 4.2 3.6-4.2 3.6M14.2 2.4L10 6l4.2 3.4L10 13l4.2 3.6" fill="none" stroke="#1c1c1c" stroke-width="0.8"/></svg>
<svg class="b" style="left:1298px;top:148px;" width="18" height="18" viewBox="0 0 18 18"><path d="M1 16.6l1-3 6.6-6.6 2.4 2.4L4.4 16z" fill="#e2e2e2" stroke="#cfcfcf" stroke-width="0.8"/><path d="M8 5.6l1.4-1.4 4.4 4.4L12.400 10z" fill="#c8c8c8"/><path d="M10.600 4.6l2.800-3c1.400-1.200 3.800 1.200 2.600 2.600l-3 2.800z" fill="#c8c8c8"/></svg>
</body></html>
